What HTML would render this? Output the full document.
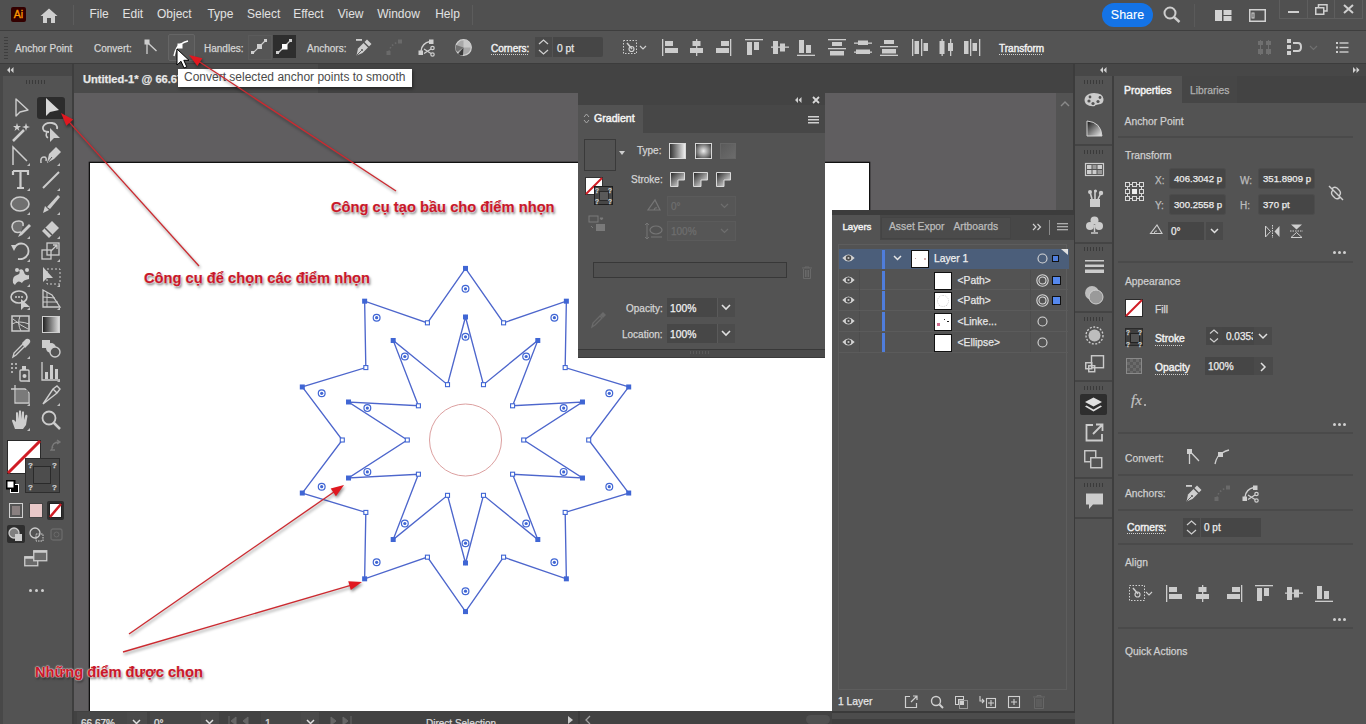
<!DOCTYPE html>
<html><head><meta charset="utf-8"><style>
html,body{margin:0;padding:0;}
body{width:1366px;height:724px;overflow:hidden;position:relative;background:#535353;font-family:"Liberation Sans", sans-serif;}
.a{position:absolute;}
.t{position:absolute;white-space:nowrap;-webkit-text-stroke:0.25px currentColor;}
svg{overflow:visible}
</style></head><body>
<div class="a" style="left:0px;top:0px;width:1366px;height:30px;background:#505050;"></div>
<div class="a" style="left:0px;top:30px;width:1366px;height:1px;background:#3e3e3e;"></div>
<div class="a" style="left:0px;top:31px;width:1366px;height:33px;background:#545454;"></div>
<div class="a" style="left:0px;top:63px;width:1366px;height:1px;background:#3c3c3c;"></div>
<div class="a" style="left:0px;top:64px;width:72px;height:660px;background:#535353;"></div>
<div class="a" style="left:0px;top:64px;width:72px;height:12px;background:#474747;"></div>
<div class="a" style="left:72px;top:64px;width:2px;height:660px;background:#3e3e3e;"></div>
<div class="a" style="left:74px;top:64px;width:999px;height:29px;background:#434343;"></div>
<div class="a" style="left:74px;top:64px;width:244px;height:29px;background:#4a4a4a;"></div>
<div class="a" style="left:74px;top:93px;width:982px;height:618px;background:#605e60;"></div>
<div class="a" style="left:90px;top:163px;width:779px;height:548px;background:#ffffff;box-shadow:0 0 0 1.3px #111;"></div>
<div class="a" style="left:1056px;top:93px;width:17px;height:618px;background:#535353;"></div>
<div class="a" style="left:74px;top:711px;width:999px;height:13px;background:#424242;"></div>
<div class="a" style="left:1073px;top:64px;width:2px;height:660px;background:#3c3c3c;"></div>
<div class="a" style="left:1075px;top:64px;width:38px;height:660px;background:#535353;"></div>
<div class="a" style="left:1075px;top:64px;width:291px;height:12px;background:#474747;"></div>
<div class="a" style="left:1112px;top:76px;width:2px;height:648px;background:#3e3e3e;"></div>
<div class="a" style="left:1114px;top:76px;width:252px;height:648px;background:#535353;"></div>
<div class="a" style="left:1114px;top:76px;width:252px;height:27px;background:#434343;"></div>
<div class="a" style="left:1114px;top:76px;width:68px;height:27px;background:#535353;"></div>
<div class="a" style="left:1182px;top:76px;width:55px;height:27px;background:#464646;"></div>
<div class="t" style="left:83px;top:72.95px;font-size:11.1px;line-height:12.40px;color:#e8e8e8;font-weight:bold;">Untitled-1* @ 66.67% (RGB/Preview)</div>
<svg class="a" style="left:1060px;top:100px;" width="10" height="7" viewBox="0 0 10 7"><path d="M1,6 L5,2 L9,6" fill="none" stroke="#8a8a8a" stroke-width="1.4"/></svg>
<div class="a" style="left:77px;top:712px;width:50px;height:12px;background:#474747;"></div>
<div class="t" style="left:81px;top:717.95px;font-size:10px;line-height:11.17px;color:#e0e0e0;font-weight:normal;">66.67%</div>
<div class="a" style="left:127px;top:712px;width:20px;height:12px;background:#4a4a4a;"></div>
<svg class="a" style="left:132px;top:719px;" width="9" height="6" viewBox="0 0 9 6"><path d="M1,1 L4.5,4.5 L8,1" fill="none" stroke="#e0e0e0" stroke-width="1.5"/></svg>
<div class="a" style="left:150px;top:712px;width:51px;height:12px;background:#474747;"></div>
<div class="t" style="left:154px;top:717.95px;font-size:10px;line-height:11.17px;color:#e0e0e0;font-weight:normal;">0°</div>
<div class="a" style="left:201px;top:712px;width:18px;height:12px;background:#4a4a4a;"></div>
<svg class="a" style="left:205px;top:719px;" width="9" height="6" viewBox="0 0 9 6"><path d="M1,1 L4.5,4.5 L8,1" fill="none" stroke="#e0e0e0" stroke-width="1.5"/></svg>
<svg class="a" style="left:228px;top:716px;" width="30" height="8" viewBox="0 0 30 8"><path d="M1,0 V8 M8,1 L3,5 L8,9 Z M20,1 L15,5 L20,9 Z" fill="#666" stroke="#666"/></svg>
<div class="a" style="left:261px;top:712px;width:40px;height:12px;background:#474747;"></div>
<div class="t" style="left:265px;top:717.50px;font-size:10.5px;line-height:11.73px;color:#e0e0e0;font-weight:normal;">1</div>
<div class="a" style="left:301px;top:712px;width:18px;height:12px;background:#4a4a4a;"></div>
<svg class="a" style="left:306px;top:719px;" width="9" height="6" viewBox="0 0 9 6"><path d="M1,1 L4.5,4.5 L8,1" fill="none" stroke="#e0e0e0" stroke-width="1.5"/></svg>
<svg class="a" style="left:326px;top:716px;" width="30" height="8" viewBox="0 0 30 8"><path d="M5,1 L10,5 L5,9 Z M17,1 L22,5 L17,9 Z M25,0 V8" fill="#666" stroke="#666"/></svg>
<div class="t" style="left:426px;top:717.95px;font-size:10px;line-height:11.17px;color:#d8d8d8;font-weight:normal;">Direct Selection</div>
<svg class="a" style="left:567px;top:715px;" width="7" height="9" viewBox="0 0 7 9"><path d="M1,1 L6,5 L1,9 Z" fill="#c8c8c8"/></svg>
<div class="a" style="left:578px;top:711px;width:2px;height:13px;background:#3a3a3a;"></div>
<svg class="a" style="left:584px;top:715px;" width="7" height="9" viewBox="0 0 7 9"><path d="M6,1 L2,5 L6,9" fill="none" stroke="#a0a0a0" stroke-width="1.3"/></svg>
<div class="a" style="left:806px;top:715px;width:24px;height:9px;background:#505050;border-radius:5px;"></div>
<svg class="a" style="left:0;top:0" width="1366" height="724" viewBox="0 0 1366 724"><path d="M465.50,268.40 L503.57,322.83 L566.36,301.17 L565.17,367.58 L628.70,386.97 L588.70,440.00 L628.70,493.03 L565.17,512.42 L566.36,578.83 L503.57,557.17 L465.50,611.60 L427.43,557.17 L364.64,578.83 L365.83,512.42 L302.30,493.03 L342.30,440.00 L302.30,386.97 L365.83,367.58 L364.64,301.17 L427.43,322.83 Z" fill="none" stroke="#4d66cc" stroke-width="1.35"/><path d="M465.50,317.00 L483.48,384.65 L537.80,340.49 L512.58,405.79 L582.48,401.99 L523.70,440.00 L582.48,478.01 L512.58,474.21 L537.80,539.51 L483.48,495.35 L465.50,563.00 L447.52,495.35 L393.20,539.51 L418.42,474.21 L348.52,478.01 L407.30,440.00 L348.52,401.99 L418.42,405.79 L393.20,340.49 L447.52,384.65 Z" fill="none" stroke="#4d66cc" stroke-width="1.35"/><circle cx="465.5" cy="440.0" r="36" fill="none" stroke="#dca0a0" stroke-width="1"/><rect x="463.00" y="265.90" width="5" height="5" fill="#4066d4"/><rect x="501.57" y="320.83" width="4" height="4" fill="#fff" stroke="#4066d4" stroke-width="1.1"/><rect x="563.86" y="298.67" width="5" height="5" fill="#4066d4"/><rect x="563.17" y="365.58" width="4" height="4" fill="#fff" stroke="#4066d4" stroke-width="1.1"/><rect x="626.20" y="384.47" width="5" height="5" fill="#4066d4"/><rect x="586.70" y="438.00" width="4" height="4" fill="#fff" stroke="#4066d4" stroke-width="1.1"/><rect x="626.20" y="490.53" width="5" height="5" fill="#4066d4"/><rect x="563.17" y="510.42" width="4" height="4" fill="#fff" stroke="#4066d4" stroke-width="1.1"/><rect x="563.86" y="576.33" width="5" height="5" fill="#4066d4"/><rect x="501.57" y="555.17" width="4" height="4" fill="#fff" stroke="#4066d4" stroke-width="1.1"/><rect x="463.00" y="609.10" width="5" height="5" fill="#4066d4"/><rect x="425.43" y="555.17" width="4" height="4" fill="#fff" stroke="#4066d4" stroke-width="1.1"/><rect x="362.14" y="576.33" width="5" height="5" fill="#4066d4"/><rect x="363.83" y="510.42" width="4" height="4" fill="#fff" stroke="#4066d4" stroke-width="1.1"/><rect x="299.80" y="490.53" width="5" height="5" fill="#4066d4"/><rect x="340.30" y="438.00" width="4" height="4" fill="#fff" stroke="#4066d4" stroke-width="1.1"/><rect x="299.80" y="384.47" width="5" height="5" fill="#4066d4"/><rect x="363.83" y="365.58" width="4" height="4" fill="#fff" stroke="#4066d4" stroke-width="1.1"/><rect x="362.14" y="298.67" width="5" height="5" fill="#4066d4"/><rect x="425.43" y="320.83" width="4" height="4" fill="#fff" stroke="#4066d4" stroke-width="1.1"/><circle cx="465.50" cy="288.80" r="3.4" fill="#fff" stroke="#4066d4" stroke-width="1.2"/><circle cx="465.50" cy="288.80" r="1.6" fill="#4066d4"/><circle cx="554.37" cy="317.68" r="3.4" fill="#fff" stroke="#4066d4" stroke-width="1.2"/><circle cx="554.37" cy="317.68" r="1.6" fill="#4066d4"/><circle cx="609.30" cy="393.28" r="3.4" fill="#fff" stroke="#4066d4" stroke-width="1.2"/><circle cx="609.30" cy="393.28" r="1.6" fill="#4066d4"/><circle cx="609.30" cy="486.72" r="3.4" fill="#fff" stroke="#4066d4" stroke-width="1.2"/><circle cx="609.30" cy="486.72" r="1.6" fill="#4066d4"/><circle cx="554.37" cy="562.32" r="3.4" fill="#fff" stroke="#4066d4" stroke-width="1.2"/><circle cx="554.37" cy="562.32" r="1.6" fill="#4066d4"/><circle cx="465.50" cy="591.20" r="3.4" fill="#fff" stroke="#4066d4" stroke-width="1.2"/><circle cx="465.50" cy="591.20" r="1.6" fill="#4066d4"/><circle cx="376.63" cy="562.32" r="3.4" fill="#fff" stroke="#4066d4" stroke-width="1.2"/><circle cx="376.63" cy="562.32" r="1.6" fill="#4066d4"/><circle cx="321.70" cy="486.72" r="3.4" fill="#fff" stroke="#4066d4" stroke-width="1.2"/><circle cx="321.70" cy="486.72" r="1.6" fill="#4066d4"/><circle cx="321.70" cy="393.28" r="3.4" fill="#fff" stroke="#4066d4" stroke-width="1.2"/><circle cx="321.70" cy="393.28" r="1.6" fill="#4066d4"/><circle cx="376.63" cy="317.68" r="3.4" fill="#fff" stroke="#4066d4" stroke-width="1.2"/><circle cx="376.63" cy="317.68" r="1.6" fill="#4066d4"/><rect x="463.00" y="314.50" width="5" height="5" fill="#4066d4"/><rect x="481.48" y="382.65" width="4" height="4" fill="#fff" stroke="#4066d4" stroke-width="1.1"/><rect x="535.30" y="337.99" width="5" height="5" fill="#4066d4"/><rect x="510.58" y="403.79" width="4" height="4" fill="#fff" stroke="#4066d4" stroke-width="1.1"/><rect x="579.98" y="399.49" width="5" height="5" fill="#4066d4"/><rect x="521.70" y="438.00" width="4" height="4" fill="#fff" stroke="#4066d4" stroke-width="1.1"/><rect x="579.98" y="475.51" width="5" height="5" fill="#4066d4"/><rect x="510.58" y="472.21" width="4" height="4" fill="#fff" stroke="#4066d4" stroke-width="1.1"/><rect x="535.30" y="537.01" width="5" height="5" fill="#4066d4"/><rect x="481.48" y="493.35" width="4" height="4" fill="#fff" stroke="#4066d4" stroke-width="1.1"/><rect x="463.00" y="560.50" width="5" height="5" fill="#4066d4"/><rect x="445.52" y="493.35" width="4" height="4" fill="#fff" stroke="#4066d4" stroke-width="1.1"/><rect x="390.70" y="537.01" width="5" height="5" fill="#4066d4"/><rect x="416.42" y="472.21" width="4" height="4" fill="#fff" stroke="#4066d4" stroke-width="1.1"/><rect x="346.02" y="475.51" width="5" height="5" fill="#4066d4"/><rect x="405.30" y="438.00" width="4" height="4" fill="#fff" stroke="#4066d4" stroke-width="1.1"/><rect x="346.02" y="399.49" width="5" height="5" fill="#4066d4"/><rect x="416.42" y="403.79" width="4" height="4" fill="#fff" stroke="#4066d4" stroke-width="1.1"/><rect x="390.70" y="337.99" width="5" height="5" fill="#4066d4"/><rect x="445.52" y="382.65" width="4" height="4" fill="#fff" stroke="#4066d4" stroke-width="1.1"/><circle cx="465.50" cy="336.80" r="3.4" fill="#fff" stroke="#4066d4" stroke-width="1.2"/><circle cx="465.50" cy="336.80" r="1.6" fill="#4066d4"/><circle cx="526.16" cy="356.51" r="3.4" fill="#fff" stroke="#4066d4" stroke-width="1.2"/><circle cx="526.16" cy="356.51" r="1.6" fill="#4066d4"/><circle cx="563.65" cy="408.11" r="3.4" fill="#fff" stroke="#4066d4" stroke-width="1.2"/><circle cx="563.65" cy="408.11" r="1.6" fill="#4066d4"/><circle cx="563.65" cy="471.89" r="3.4" fill="#fff" stroke="#4066d4" stroke-width="1.2"/><circle cx="563.65" cy="471.89" r="1.6" fill="#4066d4"/><circle cx="526.16" cy="523.49" r="3.4" fill="#fff" stroke="#4066d4" stroke-width="1.2"/><circle cx="526.16" cy="523.49" r="1.6" fill="#4066d4"/><circle cx="465.50" cy="543.20" r="3.4" fill="#fff" stroke="#4066d4" stroke-width="1.2"/><circle cx="465.50" cy="543.20" r="1.6" fill="#4066d4"/><circle cx="404.84" cy="523.49" r="3.4" fill="#fff" stroke="#4066d4" stroke-width="1.2"/><circle cx="404.84" cy="523.49" r="1.6" fill="#4066d4"/><circle cx="367.35" cy="471.89" r="3.4" fill="#fff" stroke="#4066d4" stroke-width="1.2"/><circle cx="367.35" cy="471.89" r="1.6" fill="#4066d4"/><circle cx="367.35" cy="408.11" r="3.4" fill="#fff" stroke="#4066d4" stroke-width="1.2"/><circle cx="367.35" cy="408.11" r="1.6" fill="#4066d4"/><circle cx="404.84" cy="356.51" r="3.4" fill="#fff" stroke="#4066d4" stroke-width="1.2"/><circle cx="404.84" cy="356.51" r="1.6" fill="#4066d4"/></svg>
<div class="a" style="left:578px;top:93px;width:247px;height:264px;background:#535353;"></div>
<div class="a" style="left:578px;top:93px;width:247px;height:12px;background:#434343;"></div>
<div class="a" style="left:578px;top:105px;width:247px;height:28px;background:#474747;"></div>
<div class="a" style="left:578px;top:105px;width:65px;height:28px;background:#535353;"></div>
<div class="a" style="left:578px;top:349px;width:247px;height:1px;background:#383838;"></div>
<div class="a" style="left:578px;top:350px;width:247px;height:7px;background:#4a4a4a;"></div>
<div class="a" style="left:578px;top:357px;width:247px;height:1px;background:#3a3a3a;"></div>
<div class="a" style="left:832px;top:210px;width:243px;height:514px;background:#535353;"></div>
<div class="a" style="left:832px;top:210px;width:243px;height:5px;background:#3c3c3c;"></div>
<div class="a" style="left:832px;top:215px;width:243px;height:25px;background:#474747;"></div>
<div class="a" style="left:832px;top:215px;width:48px;height:25px;background:#535353;"></div>
<div class="a" style="left:1074px;top:210px;width:1px;height:514px;background:#3a3a3a;"></div>
<div class="a" style="left:11px;top:7px;width:15px;height:15px;background:#330000;border-radius:2px;"></div>
<div class="t" style="left:11px;top:7px;width:15px;height:15px;line-height:15px;text-align:center;font-size:10.5px;font-weight:normal;color:#ff9a00;-webkit-text-stroke:0.3px #ff9a00;">Ai</div>
<svg class="a" style="left:40px;top:8px;" width="18" height="15" viewBox="0 0 18 15"><path d="M9,0.5 L17.5,8 L15,8 L15,15 L11,15 L11,10 L7,10 L7,15 L3,15 L3,8 L0.5,8 Z" fill="#cfcfcf"/></svg>
<div class="a" style="left:73px;top:5px;width:1px;height:20px;background:#5c5c5c;"></div>
<div class="t" style="left:89.4px;top:7.64px;font-size:12px;line-height:13.40px;color:#e2e2e2;font-weight:normal;-webkit-text-stroke:0;">File</div>
<div class="t" style="left:122.5px;top:7.64px;font-size:12px;line-height:13.40px;color:#e2e2e2;font-weight:normal;-webkit-text-stroke:0;">Edit</div>
<div class="t" style="left:157px;top:7.64px;font-size:12px;line-height:13.40px;color:#e2e2e2;font-weight:normal;-webkit-text-stroke:0;">Object</div>
<div class="t" style="left:207.4px;top:7.64px;font-size:12px;line-height:13.40px;color:#e2e2e2;font-weight:normal;-webkit-text-stroke:0;">Type</div>
<div class="t" style="left:247px;top:7.64px;font-size:12px;line-height:13.40px;color:#e2e2e2;font-weight:normal;-webkit-text-stroke:0;">Select</div>
<div class="t" style="left:293.2px;top:7.64px;font-size:12px;line-height:13.40px;color:#e2e2e2;font-weight:normal;-webkit-text-stroke:0;">Effect</div>
<div class="t" style="left:337.7px;top:7.64px;font-size:12px;line-height:13.40px;color:#e2e2e2;font-weight:normal;-webkit-text-stroke:0;">View</div>
<div class="t" style="left:377.2px;top:7.64px;font-size:12px;line-height:13.40px;color:#e2e2e2;font-weight:normal;-webkit-text-stroke:0;">Window</div>
<div class="t" style="left:435.2px;top:7.64px;font-size:12px;line-height:13.40px;color:#e2e2e2;font-weight:normal;-webkit-text-stroke:0;">Help</div>
<div class="a" style="left:472px;top:5px;width:1px;height:20px;background:#5c5c5c;"></div>
<div class="a" style="left:1102px;top:3px;width:51px;height:24px;background:#1473e6;border-radius:12px;"></div>
<div class="t" style="left:927.5px;width:400px;text-align:center;top:8.69px;font-size:12.5px;line-height:13.96px;color:#ffffff;font-weight:normal;-webkit-text-stroke:0.1px #fff;">Share</div>
<svg class="a" style="left:1163px;top:6px;" width="19" height="18" viewBox="0 0 19 18"><circle cx="7" cy="7" r="5.5" fill="none" stroke="#cdcdcd" stroke-width="2"/><line x1="11" y1="11" x2="16.5" y2="16" stroke="#cdcdcd" stroke-width="2.4"/></svg>
<div class="a" style="left:1194px;top:4px;width:1px;height:23px;background:#5a5a5a;"></div>
<svg class="a" style="left:1215px;top:10px;" width="17" height="12" viewBox="0 0 17 12"><rect x="0" y="0" width="7" height="11" fill="#d2d2d2"/><rect x="8.5" y="0" width="8" height="5" fill="#d2d2d2"/><rect x="8.5" y="6" width="8" height="5" fill="#d2d2d2"/></svg>
<svg class="a" style="left:1249px;top:9px;" width="17" height="13" viewBox="0 0 17 13"><rect x="0.75" y="0.75" width="15.5" height="11.5" fill="none" stroke="#d2d2d2" stroke-width="1.5"/><rect x="3" y="4" width="2" height="5" fill="none" stroke="#d2d2d2" stroke-width="1"/></svg>
<div class="a" style="left:1279px;top:-1px;width:82px;height:19px;border:1px solid #5e5e5e;border-top:none;"></div>
<div class="a" style="left:1307px;top:0px;width:1px;height:18px;background:#5e5e5e;"></div>
<div class="a" style="left:1334px;top:0px;width:1px;height:18px;background:#5e5e5e;"></div>
<div class="a" style="left:1288px;top:11px;width:11px;height:2px;background:#cfcfcf;"></div>
<svg class="a" style="left:1315px;top:4px;" width="13" height="11" viewBox="0 0 13 11"><rect x="0.75" y="3.75" width="8" height="6.5" fill="none" stroke="#cfcfcf" stroke-width="1.5"/><path d="M3.5,3.5 L3.5,0.75 L12,0.75 L12,7 L9,7" fill="none" stroke="#cfcfcf" stroke-width="1.5"/></svg>
<svg class="a" style="left:1343px;top:4px;" width="11" height="10" viewBox="0 0 11 10"><path d="M1,1 L10,9 M10,1 L1,9" stroke="#cfcfcf" stroke-width="2"/></svg>
<div class="a" style="left:4px;top:37px;width:4px;height:23px;background:repeating-linear-gradient(#3e3e3e 0 1px,transparent 1px 3px);"></div>
<div class="t" style="left:15px;top:43.25px;font-size:10px;line-height:11.17px;color:#d4d4d4;font-weight:normal;">Anchor Point</div>
<div class="t" style="left:94px;top:43.25px;font-size:10px;line-height:11.17px;color:#d4d4d4;font-weight:normal;">Convert:</div>
<svg class="a" style="left:144px;top:39px;" width="14" height="16" viewBox="0 0 14 16"><rect x="0.5" y="0.5" width="5" height="5" fill="#cfcfcf"/><line x1="3" y1="5" x2="3" y2="15" stroke="#cfcfcf" stroke-width="1.3"/><line x1="4" y1="4" x2="12.5" y2="12" stroke="#cfcfcf" stroke-width="1.3"/></svg>
<div class="a" style="left:168px;top:34px;width:25px;height:25px;border:1px solid #656565;background:#585858;border-radius:2px;"></div>
<svg class="a" style="left:173px;top:39px;" width="16" height="18" viewBox="0 0 16 18"><path d="M1,17 Q3,7 8,5 Q11,3 15,2" fill="none" stroke="#ffffff" stroke-width="1.4"/><rect x="4.5" y="4.5" width="5" height="5" fill="#ffffff"/></svg>
<div class="t" style="left:204px;top:43.25px;font-size:10px;line-height:11.17px;color:#d4d4d4;font-weight:normal;">Handles:</div>
<div class="a" style="left:248px;top:35px;width:22px;height:23px;background:#555;border:1px solid #5b5b5b;"></div>
<svg class="a" style="left:251px;top:38px;" width="17" height="17" viewBox="0 0 17 17"><line x1="2" y1="15" x2="15" y2="2" stroke="#cfcfcf" stroke-width="1.2"/><rect x="6" y="6" width="5" height="5" fill="#cfcfcf"/><rect x="0" y="13" width="3" height="3" fill="#cfcfcf"/><rect x="13" y="1" width="3" height="3" fill="#cfcfcf"/></svg>
<div class="a" style="left:273px;top:35px;width:23px;height:23px;background:#2e2e2e;"></div>
<svg class="a" style="left:276px;top:38px;" width="17" height="17" viewBox="0 0 17 17"><line x1="2" y1="15" x2="15" y2="2" stroke="#cfcfcf" stroke-width="1.2"/><rect x="6" y="6" width="5.5" height="5.5" fill="#fff"/><rect x="0" y="13" width="3" height="3" fill="#cfcfcf"/><rect x="13" y="1" width="3" height="3" fill="#cfcfcf"/></svg>
<div class="t" style="left:307px;top:43.25px;font-size:10px;line-height:11.17px;color:#d4d4d4;font-weight:normal;">Anchors:</div>
<svg class="a" style="left:355px;top:38px;" width="18" height="19" viewBox="0 0 18 19"><rect x="1" y="1" width="6" height="1.8" fill="#cfcfcf"/><path d="M1.5,17.5 L3,10.5 L8.5,5 L13,9.5 L7.5,15 Z" fill="#cfcfcf"/><path d="M9.5,4 L12,1.5 L16.5,6 L14,8.5 Z" fill="#cfcfcf"/><path d="M1.8,17.2 L6.5,12.5" stroke="#545454" stroke-width="0.9"/><circle cx="7" cy="12" r="1" fill="#545454"/></svg>
<svg class="a" style="left:386px;top:39px;" width="17" height="17" viewBox="0 0 17 17"><path d="M3,13 Q4,6 12,3" fill="none" stroke="#6a6a6a" stroke-width="1.6" stroke-dasharray="1.6 2"/><rect x="0.5" y="12" width="4" height="4" fill="#6a6a6a"/><rect x="12" y="0.5" width="4" height="4" fill="#6a6a6a"/></svg>
<svg class="a" style="left:418px;top:39px;" width="18" height="18" viewBox="0 0 18 18"><path d="M3,12 Q4,4 12,2.5" fill="none" stroke="#cfcfcf" stroke-width="1.3"/><rect x="0.5" y="11.5" width="4.5" height="4.5" fill="#cfcfcf"/><rect x="11" y="0.5" width="4.5" height="4.5" fill="#cfcfcf"/><circle cx="14.5" cy="9" r="1.7" fill="none" stroke="#cfcfcf" stroke-width="1.2"/><circle cx="14.5" cy="15.5" r="1.7" fill="none" stroke="#cfcfcf" stroke-width="1.2"/><path d="M6,10 L13,14.5 M6,14.5 L13,10" stroke="#cfcfcf" stroke-width="1.3"/></svg>
<svg class="a" style="left:455px;top:39px;" width="17" height="17" viewBox="0 0 17 17"><circle cx="8.5" cy="8.5" r="7.8" fill="#a8a8a8" stroke="#d0d0d0" stroke-width="1.2"/><path d="M8.5,8.5 L8.5,0.7 A7.8,7.8 0 0 1 16.3,8.5 Z" fill="#c8c8c8"/><path d="M8.5,8.5 L2,13 A7.8,7.8 0 0 1 1,6 Z" fill="#707070"/><path d="M8.5,8.5 L3,15 A7.8,7.8 0 0 0 8,16.3 Z" fill="#3a3a3a"/></svg>
<div class="t" style="left:491px;top:43.25px;font-size:10px;line-height:11.17px;color:#f2f2f2;font-weight:normal;-webkit-text-stroke:0.4px #f2f2f2;">Corners:</div>
<div class="a" style="left:491px;top:54px;width:37px;height:1px;background:repeating-linear-gradient(90deg,#cfcfcf 0 1px,transparent 1px 2px);"></div>
<div class="a" style="left:535px;top:37px;width:17px;height:20px;background:#494949;"></div>
<svg class="a" style="left:538px;top:39px;" width="11" height="16" viewBox="0 0 11 16"><path d="M1,5 L5.5,1 L10,5 M1,11 L5.5,15 L10,11" fill="none" stroke="#cfcfcf" stroke-width="1.3"/></svg>
<div class="a" style="left:553px;top:37px;width:50px;height:20px;background:#464646;border-radius:0 2px 2px 0;"></div>
<div class="t" style="left:557px;top:42.68px;font-size:10.3px;line-height:11.51px;color:#e6e6e6;font-weight:normal;">0 pt</div>
<svg class="a" style="left:623px;top:40px;" width="25" height="16" viewBox="0 0 25 16"><rect x="0.5" y="0.5" width="13" height="13" fill="none" stroke="#cfcfcf" stroke-width="1" stroke-dasharray="1.5 1.5"/><path d="M4,3 L9,9" stroke="#cfcfcf" stroke-width="1.5"/><circle cx="8.5" cy="9" r="2.5" fill="none" stroke="#cfcfcf" stroke-width="1.2"/><path d="M17,6 L20,9 L23,6" fill="none" stroke="#cfcfcf" stroke-width="1.2"/></svg>
<svg class="a" style="left:662px;top:39px;" width="18" height="17" viewBox="0 0 18 17"><rect x="0" y="0" width="1.3" height="17" fill="#cccccc"/><rect x="3" y="2" width="8" height="5" fill="#cccccc"/><rect x="3" y="9" width="13" height="5" fill="#cccccc"/></svg>
<svg class="a" style="left:689px;top:39px;" width="18" height="17" viewBox="0 0 18 17"><rect x="7" y="0" width="1.3" height="17" fill="#cccccc"/><rect x="3.5" y="2" width="8" height="5" fill="#cccccc"/><rect x="1" y="9" width="13" height="5" fill="#cccccc"/></svg>
<svg class="a" style="left:715px;top:39px;" width="18" height="17" viewBox="0 0 18 17"><rect x="15" y="0" width="1.3" height="17" fill="#cccccc"/><rect x="6" y="2" width="8" height="5" fill="#cccccc"/><rect x="1" y="9" width="13" height="5" fill="#cccccc"/></svg>
<svg class="a" style="left:745px;top:39px;" width="18" height="17" viewBox="0 0 18 17"><rect x="0" y="0" width="18" height="1.3" fill="#cccccc"/><rect x="2" y="3" width="5" height="13" fill="#cccccc"/><rect x="9" y="3" width="5" height="8" fill="#cccccc"/></svg>
<svg class="a" style="left:771px;top:39px;" width="18" height="17" viewBox="0 0 18 17"><rect x="0" y="7.5" width="18" height="1.3" fill="#cccccc"/><rect x="2" y="2" width="5" height="13" fill="#cccccc"/><rect x="9" y="4.5" width="5" height="8" fill="#cccccc"/></svg>
<svg class="a" style="left:797px;top:39px;" width="18" height="17" viewBox="0 0 18 17"><rect x="0" y="15.7" width="18" height="1.3" fill="#cccccc"/><rect x="2" y="1" width="5" height="13" fill="#cccccc"/><rect x="9" y="6" width="5" height="8" fill="#cccccc"/></svg>
<svg class="a" style="left:828px;top:39px;" width="18" height="17" viewBox="0 0 18 17"><rect x="0" y="0" width="18" height="1.3" fill="#cccccc"/><rect x="4" y="3" width="10" height="4" fill="#cccccc"/><rect x="0" y="9" width="18" height="1.3" fill="#cccccc"/><rect x="2" y="12" width="14" height="4.5" fill="#cccccc"/></svg>
<svg class="a" style="left:854px;top:39px;" width="18" height="17" viewBox="0 0 18 17"><rect x="0" y="3.5" width="18" height="1.3" fill="#cccccc"/><rect x="4" y="1.5" width="10" height="4.5" fill="#cccccc"/><rect x="0" y="12.5" width="18" height="1.3" fill="#cccccc"/><rect x="2" y="10.5" width="14" height="4.5" fill="#cccccc"/></svg>
<svg class="a" style="left:880px;top:39px;" width="18" height="17" viewBox="0 0 18 17"><rect x="4" y="1" width="10" height="4" fill="#cccccc"/><rect x="0" y="7" width="18" height="1.3" fill="#cccccc"/><rect x="2" y="10" width="14" height="4.5" fill="#cccccc"/><rect x="0" y="15.7" width="18" height="1.3" fill="#cccccc"/></svg>
<svg class="a" style="left:912px;top:39px;" width="18" height="17" viewBox="0 0 18 17"><rect x="0" y="0" width="1.3" height="17" fill="#cccccc"/><rect x="2.5" y="2" width="4.5" height="13" fill="#cccccc"/><rect x="9" y="0" width="1.3" height="17" fill="#cccccc"/><rect x="11.5" y="4" width="4.5" height="8" fill="#cccccc"/></svg>
<svg class="a" style="left:938px;top:39px;" width="18" height="17" viewBox="0 0 18 17"><rect x="3.5" y="0" width="1.3" height="17" fill="#cccccc"/><rect x="1.5" y="2" width="5" height="13" fill="#cccccc"/><rect x="12" y="0" width="1.3" height="17" fill="#cccccc"/><rect x="10" y="4" width="5" height="8" fill="#cccccc"/></svg>
<svg class="a" style="left:963px;top:39px;" width="18" height="17" viewBox="0 0 18 17"><rect x="1" y="2" width="4.5" height="13" fill="#cccccc"/><rect x="7" y="0" width="1.3" height="17" fill="#cccccc"/><rect x="9.5" y="4" width="4.5" height="8" fill="#cccccc"/><rect x="16" y="0" width="1.3" height="17" fill="#cccccc"/></svg>
<div class="t" style="left:999px;top:43.25px;font-size:10px;line-height:11.17px;color:#f2f2f2;font-weight:normal;-webkit-text-stroke:0.4px #f2f2f2;">Transform</div>
<div class="a" style="left:999px;top:54px;width:44px;height:1px;background:repeating-linear-gradient(90deg,#cfcfcf 0 1px,transparent 1px 2px);"></div>
<svg class="a" style="left:1258px;top:40px;" width="17" height="15" viewBox="0 0 17 15"><rect x="0" y="1" width="5" height="4" fill="#707070"/><rect x="8" y="1" width="5" height="4" fill="#707070"/><rect x="0" y="9" width="5" height="5" fill="#707070"/><rect x="8" y="9" width="5" height="5" fill="#707070"/><rect x="2" y="0" width="1" height="15" fill="#707070"/><rect x="10" y="0" width="1" height="15" fill="#707070"/></svg>
<svg class="a" style="left:1287px;top:39px;" width="16" height="17" viewBox="0 0 16 17"><rect x="0" y="0" width="4" height="4" fill="#cfcfcf"/><rect x="0" y="6" width="4" height="4" fill="#cfcfcf"/><rect x="0" y="12" width="4" height="4" fill="#cfcfcf"/><path d="M6,4 L11,4 Q14,4 14,8 Q14,12 11,12 L6,12" fill="none" stroke="#cfcfcf" stroke-width="2"/></svg>
<svg class="a" style="left:1309px;top:45px;" width="9" height="6" viewBox="0 0 9 6"><path d="M1,1 L4.5,4.5 L8,1" fill="none" stroke="#707070" stroke-width="1.2"/></svg>
<svg class="a" style="left:1336px;top:42px;" width="13" height="11" viewBox="0 0 13 11"><rect x="0" y="0" width="2" height="2" fill="#cfcfcf"/><rect x="0" y="4.5" width="2" height="2" fill="#cfcfcf"/><rect x="0" y="9" width="2" height="2" fill="#cfcfcf"/><rect x="3.5" y="0.3" width="9" height="1.4" fill="#cfcfcf"/><rect x="3.5" y="4.8" width="9" height="1.4" fill="#cfcfcf"/><rect x="3.5" y="9.3" width="9" height="1.4" fill="#cfcfcf"/></svg>
<svg class="a" style="left:6px;top:66px;" width="8" height="8" viewBox="0 0 8 8"><path d="M4,1 L1,4 L4,7 Z M7.5,1 L4.5,4 L7.5,7 Z" fill="#d0d0d0"/></svg>
<div class="a" style="left:26px;top:80px;width:20px;height:4px;background:repeating-linear-gradient(90deg,#3a3a3a 0 1px,transparent 1px 3px);"></div>
<div class="a" style="left:37px;top:97px;width:28px;height:22px;background:#2c2c2c;border-radius:3px;"></div>
<div class="a" style="left:0px;top:76px;width:3px;height:648px;background:#484848;"></div>
<svg class="a" style="left:9px;top:96px;" width="24" height="24" viewBox="0 0 24 24"><path d="M7,3 L7,20 L11,16 L19,14 Z" fill="none" stroke="#cdcdcd" stroke-width="1.4" stroke-linejoin="round"/></svg>
<svg class="a" style="left:39px;top:96px;" width="24" height="24" viewBox="0 0 24 24"><path d="M7,2 L7,20 L11,16 L20,14 Z" fill="#d8d8d8"/></svg>
<svg class="a" style="left:9px;top:119.5px;" width="24" height="24" viewBox="0 0 24 24"><path d="M4,21 L15,10" stroke="#cdcdcd" stroke-width="2.5"/><path d="M8,3 L9,6 L12,6 L9.5,8 L10.5,11 L8,9 L5.5,11 L6.5,8 L4,6 L7,6 Z" fill="#cdcdcd"/><path d="M17,3 L18,6 L21,7 L18,8 L17,11 L16,8 L13,7 L16,6 Z" fill="#cdcdcd"/></svg>
<svg class="a" style="left:39px;top:119.5px;" width="24" height="24" viewBox="0 0 24 24"><path d="M10,12 Q3,12 4,7 Q6,2 13,3 Q19,4 18,9" fill="none" stroke="#cdcdcd" stroke-width="1.8"/><path d="M8,12 Q6,16 9,18" fill="none" stroke="#cdcdcd" stroke-width="1.5"/><path d="M11,8 L11,22 L15,18 L21,18 Z" fill="#cdcdcd"/></svg>
<svg class="a" style="left:9px;top:143px;" width="24" height="24" viewBox="0 0 24 24"><path d="M4,22 L4,4 L18,18" fill="none" stroke="#cdcdcd" stroke-width="1.5"/><path d="M21,20 L21,23 L18,23 Z" fill="#bdbdbd"/></svg>
<svg class="a" style="left:39px;top:143px;" width="24" height="24" viewBox="0 0 24 24"><path d="M2,20 Q1,14 5,14 Q8,14 7,18" fill="none" stroke="#cdcdcd" stroke-width="1.5"/><path d="M8,20 L10,11 L17,4 L22,9 L15,16 Z" fill="#cdcdcd"/><path d="M9,19 L13,14" stroke="#535353" stroke-width="1"/><path d="M21,20 L21,23 L18,23 Z" fill="#bdbdbd"/></svg>
<svg class="a" style="left:9px;top:167.5px;" width="24" height="24" viewBox="0 0 24 24"><path d="M4,3 L19,3 L19,7 M4,7 L4,3 M11.5,3 L11.5,20 M8,20 L15,20" fill="none" stroke="#cdcdcd" stroke-width="2.2"/><path d="M21,20 L21,23 L18,23 Z" fill="#bdbdbd"/></svg>
<svg class="a" style="left:39px;top:167.5px;" width="24" height="24" viewBox="0 0 24 24"><path d="M4,20 L20,4" stroke="#cdcdcd" stroke-width="2"/><path d="M21,20 L21,23 L18,23 Z" fill="#bdbdbd"/></svg>
<svg class="a" style="left:9px;top:192px;" width="24" height="24" viewBox="0 0 24 24"><ellipse cx="11" cy="12" rx="9" ry="7" fill="#707070" stroke="#cdcdcd" stroke-width="1.6"/><path d="M21,20 L21,23 L18,23 Z" fill="#bdbdbd"/></svg>
<svg class="a" style="left:39px;top:192px;" width="24" height="24" viewBox="0 0 24 24"><path d="M4,21 L6,14 L10,18 Z" fill="#cdcdcd"/><path d="M8,15 L19,3 L21,5 L11,17 Z" fill="#cdcdcd"/><path d="M21,20 L21,23 L18,23 Z" fill="#bdbdbd"/></svg>
<svg class="a" style="left:9px;top:215.5px;" width="24" height="24" viewBox="0 0 24 24"><path d="M12,16 Q4,18 3,11 Q3,5 10,5 Q15,5 14,10" fill="#707070" stroke="#cdcdcd" stroke-width="1.6"/><path d="M9,21 L11,17 L20,8 L22,10 L13,19 Z" fill="#cdcdcd"/><path d="M21,20 L21,23 L18,23 Z" fill="#bdbdbd"/></svg>
<svg class="a" style="left:39px;top:215.5px;" width="24" height="24" viewBox="0 0 24 24"><path d="M3,15 L13,5 L20,12 L10,22 Z" fill="#cdcdcd"/><path d="M6,12 L13,19" stroke="#535353" stroke-width="1.5"/><path d="M21,20 L21,23 L18,23 Z" fill="#bdbdbd"/></svg>
<svg class="a" style="left:9px;top:239px;" width="24" height="24" viewBox="0 0 24 24"><path d="M5,9 Q9,3 15,5 Q21,8 19,15 Q16,21 9,20" fill="none" stroke="#cdcdcd" stroke-width="1.8" stroke-dasharray="30 0"/><path d="M2,6 L8,6 L5,12 Z" fill="#cdcdcd"/><path d="M21,20 L21,23 L18,23 Z" fill="#bdbdbd"/></svg>
<svg class="a" style="left:39px;top:239px;" width="24" height="24" viewBox="0 0 24 24"><rect x="3" y="11" width="9" height="9" fill="none" stroke="#cdcdcd" stroke-width="1.3"/><rect x="8" y="4" width="12" height="12" fill="none" stroke="#cdcdcd" stroke-width="1.3"/><path d="M12,12 L18,6 M14,6 L18,6 L18,10" fill="none" stroke="#cdcdcd" stroke-width="1.3"/><path d="M21,20 L21,23 L18,23 Z" fill="#bdbdbd"/></svg>
<svg class="a" style="left:9px;top:263.7px;" width="24" height="24" viewBox="0 0 24 24"><path d="M4,19 Q3,12 8,11 Q12,10 10,6 Q14,4 15,8 Q16,12 20,11 L20,15 Q14,16 13,19 Q9,15 6,21 Z" fill="#cdcdcd"/><circle cx="8" cy="6" r="2" fill="#cdcdcd"/><circle cx="18" cy="6" r="2" fill="#cdcdcd"/><path d="M21,20 L21,23 L18,23 Z" fill="#bdbdbd"/></svg>
<svg class="a" style="left:39px;top:263.7px;" width="24" height="24" viewBox="0 0 24 24"><path d="M4,3 L4,18 L8,14 L14,14 Z" fill="#cdcdcd"/><rect x="8" y="5" width="13" height="15" fill="none" stroke="#cdcdcd" stroke-width="1" stroke-dasharray="2 2"/><path d="M21,20 L21,23 L18,23 Z" fill="#bdbdbd"/></svg>
<svg class="a" style="left:9px;top:286.7px;" width="24" height="24" viewBox="0 0 24 24"><ellipse cx="10" cy="10" rx="8" ry="6" fill="none" stroke="#cdcdcd" stroke-width="1.6"/><circle cx="7" cy="10" r="1" fill="#cdcdcd"/><circle cx="10" cy="10" r="1" fill="#cdcdcd"/><circle cx="13" cy="10" r="1" fill="#cdcdcd"/><path d="M12,12 L12,23 L15,20 L21,20 Z" fill="#cdcdcd"/><path d="M21,20 L21,23 L18,23 Z" fill="#bdbdbd"/></svg>
<svg class="a" style="left:39px;top:286.7px;" width="24" height="24" viewBox="0 0 24 24"><path d="M4,3 L4,20 L21,20 L13,8 Z" fill="none" stroke="#cdcdcd" stroke-width="1.3"/><path d="M8,5 L8,20 M4,10 L16,11 M4,15 L19,15" stroke="#cdcdcd" stroke-width="1"/><path d="M21,20 L21,23 L18,23 Z" fill="#bdbdbd"/></svg>
<svg class="a" style="left:9px;top:312px;" width="24" height="24" viewBox="0 0 24 24"><rect x="3" y="4" width="17" height="15" fill="none" stroke="#cdcdcd" stroke-width="1.5"/><path d="M3,12 Q10,8 20,12 M11,4 Q8,12 12,19 M4,7 Q12,14 19,17" fill="none" stroke="#cdcdcd" stroke-width="1"/></svg>
<div class="a" style="left:42px;top:316px;width:16px;height:15px;background:linear-gradient(90deg,#222,#ddd);border:1px solid #cfcfcf;"></div>
<svg class="a" style="left:9px;top:336px;" width="24" height="24" viewBox="0 0 24 24"><path d="M4,21 L5,17 L14,8 L16,10 L7,19 Z" fill="none" stroke="#cdcdcd" stroke-width="1.4"/><path d="M13,7 L17,3 Q19,2 21,4 Q22,6 20,8 L16,12 Z" fill="#cdcdcd"/><path d="M21,20 L21,23 L18,23 Z" fill="#bdbdbd"/></svg>
<svg class="a" style="left:39px;top:336px;" width="24" height="24" viewBox="0 0 24 24"><rect x="3" y="4" width="8" height="8" fill="#cdcdcd"/><circle cx="12" cy="12" r="5" fill="#cdcdcd"/><circle cx="16" cy="16" r="5" fill="#535353" stroke="#cdcdcd" stroke-width="1.4"/></svg>
<svg class="a" style="left:9px;top:359px;" width="24" height="24" viewBox="0 0 24 24"><rect x="11" y="11" width="9" height="11" rx="1" fill="none" stroke="#cdcdcd" stroke-width="1.4"/><circle cx="15.5" cy="17" r="2" fill="#cdcdcd"/><rect x="13" y="7" width="4" height="4" fill="#cdcdcd"/><circle cx="3" cy="5" r="1" fill="#cdcdcd"/><circle cx="7" cy="5" r="1" fill="#cdcdcd"/><circle cx="3" cy="9" r="1" fill="#cdcdcd"/><circle cx="7" cy="9" r="1" fill="#cdcdcd"/><circle cx="3" cy="13" r="1" fill="#cdcdcd"/><path d="M21,20 L21,23 L18,23 Z" fill="#bdbdbd"/></svg>
<svg class="a" style="left:39px;top:359px;" width="24" height="24" viewBox="0 0 24 24"><path d="M3,3 L3,21 L21,21" fill="none" stroke="#cdcdcd" stroke-width="1.3"/><rect x="6" y="13" width="3" height="7" fill="#cdcdcd"/><rect x="11" y="6" width="3" height="14" fill="#cdcdcd"/><rect x="16" y="10" width="3" height="10" fill="#cdcdcd"/><path d="M21,20 L21,23 L18,23 Z" fill="#bdbdbd"/></svg>
<svg class="a" style="left:9px;top:383.3px;" width="24" height="24" viewBox="0 0 24 24"><path d="M6,2 L6,20 L20,20 L20,10 L16,6 L6,6 M2,6 L6,6" fill="none" stroke="#cdcdcd" stroke-width="1.3"/><rect x="7" y="7" width="12" height="12" fill="#7a7a7a"/><path d="M21,20 L21,23 L18,23 Z" fill="#bdbdbd"/></svg>
<svg class="a" style="left:39px;top:383.3px;" width="24" height="24" viewBox="0 0 24 24"><path d="M4,21 L14,6 L18,3 L21,6 L18,10 Z" fill="none" stroke="#cdcdcd" stroke-width="1.4"/><path d="M14,6 L18,10" stroke="#cdcdcd" stroke-width="1.4"/><path d="M21,20 L21,23 L18,23 Z" fill="#bdbdbd"/></svg>
<svg class="a" style="left:9px;top:407.5px;" width="24" height="24" viewBox="0 0 24 24"><path d="M6,21 L3,13 Q3,11 5,12 L7,14 L7,5 Q8,3 9,5 L9.5,11 L10,3 Q11,1.5 12,3 L12.5,11 L13,4 Q14,2.5 15,4 L15,12 L16.5,7 Q18,6 18.5,8 L17,17 L14,21 Z" fill="#cdcdcd"/><path d="M21,20 L21,23 L18,23 Z" fill="#bdbdbd"/></svg>
<svg class="a" style="left:39px;top:407.5px;" width="24" height="24" viewBox="0 0 24 24"><circle cx="10" cy="10" r="6.5" fill="none" stroke="#cdcdcd" stroke-width="1.8"/><path d="M14.5,14.5 L21,21" stroke="#cdcdcd" stroke-width="2.5"/></svg>
<div class="a" style="left:7px;top:440px;width:34px;height:34px;background:#fff;border:1px solid #2a2a2a;box-sizing:border-box;overflow:hidden;"></div>
<svg class="a" style="left:7px;top:440px;" width="34" height="34" viewBox="0 0 34 34"><line x1="1" y1="33" x2="33" y2="1" stroke="#d01c24" stroke-width="3"/></svg>
<svg class="a" style="left:50px;top:439px;" width="13" height="13" viewBox="0 0 13 13"><path d="M2,10 Q2,3 9,3 M7,1 L10,3 L7,5 M3,8 L1,11 L5,11" fill="none" stroke="#7a7a7a" stroke-width="1.3"/></svg>
<div class="a" style="left:25px;top:458px;width:35px;height:35px;background:#474747;border:1px solid #2e2e2e;box-sizing:border-box;"></div>
<div class="a" style="left:33px;top:466px;width:18px;height:18px;border:1px solid #2a2a2a;box-sizing:border-box;background:#4d4d4d;"></div>
<div class="t" style="left:28px;top:461.76px;font-size:8px;line-height:8.94px;color:#d0d0d0;font-weight:bold;">?</div>
<div class="t" style="left:52px;top:461.76px;font-size:8px;line-height:8.94px;color:#d0d0d0;font-weight:bold;">?</div>
<div class="t" style="left:28px;top:483.76px;font-size:8px;line-height:8.94px;color:#d0d0d0;font-weight:bold;">?</div>
<div class="t" style="left:52px;top:483.76px;font-size:8px;line-height:8.94px;color:#d0d0d0;font-weight:bold;">?</div>
<svg class="a" style="left:6px;top:480px;" width="13" height="13" viewBox="0 0 13 13"><rect x="0.75" y="0.75" width="8" height="8" fill="#fff" stroke="#000" stroke-width="1.5"/><rect x="4.5" y="4.5" width="8" height="8" fill="#000" stroke="#fff" stroke-width="1"/><rect x="0.75" y="0.75" width="7.5" height="7.5" fill="#fff" stroke="#000" stroke-width="1.5"/></svg>
<div class="a" style="left:9px;top:503px;width:14px;height:15px;border:1.5px solid #d0d0d0;box-sizing:border-box;background:#555;"></div>
<div class="a" style="left:12px;top:506px;width:8px;height:9px;background:#8a8080;"></div>
<div class="a" style="left:29px;top:503px;width:14px;height:15px;background:#e8c8c8;border:1px solid #444;box-sizing:border-box;"></div>
<div class="a" style="left:47px;top:501px;width:17px;height:19px;background:#2e2e2e;border-radius:2px;"></div>
<div class="a" style="left:49px;top:503px;width:13px;height:15px;background:#fff;border:1px solid #222;box-sizing:border-box;"></div>
<svg class="a" style="left:49px;top:503px;" width="13" height="15" viewBox="0 0 13 15"><line x1="1" y1="14" x2="12" y2="1" stroke="#d01c24" stroke-width="2.5"/></svg>
<div class="a" style="left:7px;top:525px;width:18px;height:18px;background:#2e2e2e;border-radius:2px;"></div>
<svg class="a" style="left:8px;top:527px;" width="16" height="15" viewBox="0 0 16 15"><circle cx="6" cy="6" r="5" fill="#808080" stroke="#cdcdcd" stroke-width="1.3"/><rect x="7" y="7" width="7" height="7" fill="#cdcdcd"/></svg>
<svg class="a" style="left:29px;top:527px;" width="16" height="15" viewBox="0 0 16 15"><circle cx="6" cy="6" r="5" fill="none" stroke="#cdcdcd" stroke-width="1.3"/><rect x="7" y="7" width="7" height="7" fill="none" stroke="#cdcdcd" stroke-width="1" stroke-dasharray="1.5 1"/></svg>
<svg class="a" style="left:50px;top:528px;" width="14" height="13" viewBox="0 0 14 13"><rect x="1" y="1" width="11" height="11" rx="2" fill="none" stroke="#6a6a6a" stroke-width="1.3"/><circle cx="6.5" cy="6.5" r="2.5" fill="none" stroke="#6a6a6a" stroke-width="1"/></svg>
<svg class="a" style="left:24px;top:550px;" width="24" height="17" viewBox="0 0 24 17"><rect x="0.75" y="6.75" width="13" height="9" fill="#6a6a6a" stroke="#cdcdcd" stroke-width="1.3"/><rect x="0.75" y="6.75" width="13" height="2" fill="#cdcdcd"/><rect x="9.75" y="0.75" width="13" height="10" fill="#6a6a6a" stroke="#cdcdcd" stroke-width="1.3"/><rect x="9.75" y="0.75" width="13" height="2" fill="#cdcdcd"/></svg>
<div class="a" style="left:28.5px;top:589px;width:3px;height:3px;border-radius:50%;background:#cfcfcf;"></div>
<div class="a" style="left:34.5px;top:589px;width:3px;height:3px;border-radius:50%;background:#cfcfcf;"></div>
<div class="a" style="left:40.5px;top:589px;width:3px;height:3px;border-radius:50%;background:#cfcfcf;"></div>
<svg class="a" style="left:794px;top:96px;" width="8" height="8" viewBox="0 0 8 8"><path d="M4,1 L1,4 L4,7 Z M7.5,1 L4.5,4 L7.5,7 Z" fill="#d0d0d0"/></svg>
<svg class="a" style="left:812px;top:96px;" width="8" height="8" viewBox="0 0 8 8"><path d="M1,1 L7,7 M7,1 L1,7" stroke="#d8d8d8" stroke-width="1.8"/></svg>
<svg class="a" style="left:583px;top:113px;" width="7" height="11" viewBox="0 0 7 11"><path d="M1,4 L3.5,1 L6,4 M1,7 L3.5,10 L6,7" fill="none" stroke="#a8a8a8" stroke-width="1"/></svg>
<div class="t" style="left:594px;top:112.91px;font-size:10.6px;line-height:11.84px;color:#f4f4f4;font-weight:normal;-webkit-text-stroke:0.45px #f4f4f4;">Gradient</div>
<svg class="a" style="left:808px;top:116px;" width="11" height="8" viewBox="0 0 11 8"><path d="M0,0.75 H11 M0,3.75 H11 M0,6.75 H11" stroke="#d0d0d0" stroke-width="1.3"/></svg>
<div class="a" style="left:584px;top:139px;width:32px;height:32px;border:1px solid #3a3a3a;box-sizing:border-box;background:#535353;"></div>
<svg class="a" style="left:619px;top:151px;" width="7" height="5" viewBox="0 0 7 5"><path d="M0,0 L6,0 L3,4 Z" fill="#cfcfcf"/></svg>
<div class="a" style="left:585px;top:177px;width:18px;height:18px;background:#fff;border:1px solid #333;box-sizing:border-box;"></div>
<svg class="a" style="left:585px;top:177px;" width="18" height="18" viewBox="0 0 18 18"><line x1="1" y1="17" x2="17" y2="1" stroke="#d01c24" stroke-width="2"/></svg>
<div class="a" style="left:594px;top:186px;width:19px;height:19px;background:#474747;border:1px solid #1e1e1e;box-sizing:border-box;"></div>
<div class="a" style="left:599px;top:191px;width:8px;height:8px;background:#5a5a5a;border:1px solid #2a2a2a;"></div>
<div class="t" style="left:595px;top:187.12px;font-size:6.5px;line-height:7.26px;color:#cfcfcf;font-weight:bold;">?</div>
<div class="t" style="left:608px;top:187.12px;font-size:6.5px;line-height:7.26px;color:#cfcfcf;font-weight:bold;">?</div>
<div class="t" style="left:595px;top:198.12px;font-size:6.5px;line-height:7.26px;color:#cfcfcf;font-weight:bold;">?</div>
<div class="t" style="left:608px;top:198.12px;font-size:6.5px;line-height:7.26px;color:#cfcfcf;font-weight:bold;">?</div>
<svg class="a" style="left:588px;top:215px;" width="18" height="17" viewBox="0 0 18 17"><rect x="1" y="1" width="9" height="6" fill="none" stroke="#7a7a7a" stroke-width="1"/><rect x="8" y="9" width="9" height="7" fill="#7a7a7a"/><path d="M12,3 L15,3 L13.5,5 Z M3,11 L5,13" stroke="#7a7a7a" fill="#7a7a7a"/></svg>
<div class="t" style="left:637px;top:145.45px;font-size:10px;line-height:11.17px;color:#d4d4d4;font-weight:normal;">Type:</div>
<div class="a" style="left:669px;top:143px;width:17px;height:16px;background:linear-gradient(90deg,#333,#eee);border:1.5px solid #d8d8d8;box-sizing:border-box;"></div>
<div class="a" style="left:695px;top:143px;width:17px;height:16px;background:radial-gradient(circle,#eee,#333);border:1.5px solid #d8d8d8;box-sizing:border-box;"></div>
<div class="a" style="left:720px;top:143px;width:16px;height:16px;background:linear-gradient(135deg,#5a5a5a,#6c6c6c);border:1px solid #666;box-sizing:border-box;"></div>
<div class="t" style="left:631px;top:173.95px;font-size:10px;line-height:11.17px;color:#d4d4d4;font-weight:normal;">Stroke:</div>
<svg class="a" style="left:670px;top:172px;" width="15" height="15" viewBox="0 0 15 15"><defs><linearGradient id="g670" x1="0" y1="0" x2="1" y2="1"><stop offset="0" stop-color="#222"/><stop offset="1" stop-color="#fff"/></linearGradient></defs><path d="M0.5,0.5 L14.5,0.5 L14.5,8 L8,8 L8,14.5 L0.5,14.5 Z" fill="url(#g670)" stroke="#dadada" stroke-width="1"/></svg>
<svg class="a" style="left:693px;top:172px;" width="15" height="15" viewBox="0 0 15 15"><defs><linearGradient id="g693" x1="0" y1="0" x2="1" y2="1"><stop offset="0" stop-color="#222"/><stop offset="1" stop-color="#fff"/></linearGradient></defs><path d="M0.5,0.5 L14.5,0.5 L14.5,8 L8,8 L8,14.5 L0.5,14.5 Z" fill="url(#g693)" stroke="#dadada" stroke-width="1"/></svg>
<svg class="a" style="left:716px;top:172px;" width="15" height="15" viewBox="0 0 15 15"><defs><linearGradient id="g716" x1="0" y1="0" x2="1" y2="1"><stop offset="0" stop-color="#222"/><stop offset="1" stop-color="#fff"/></linearGradient></defs><path d="M0.5,0.5 L14.5,0.5 L14.5,8 L8,8 L8,14.5 L0.5,14.5 Z" fill="url(#g716)" stroke="#dadada" stroke-width="1"/></svg>
<svg class="a" style="left:647px;top:198px;" width="15" height="13" viewBox="0 0 15 13"><path d="M1,12 L13,12 L8,2 Z M7,12 Q8,9 10,10" fill="none" stroke="#767676" stroke-width="1.2"/></svg>
<div class="a" style="left:667px;top:196px;width:69px;height:20px;background:#565656;border:1px solid #5b5b5b;box-sizing:border-box;"></div>
<div class="t" style="left:671px;top:200.95px;font-size:10px;line-height:11.17px;color:#6e6e6e;font-weight:normal;">0°</div>
<svg class="a" style="left:720px;top:203px;" width="9" height="6" viewBox="0 0 9 6"><path d="M1,1 L4.5,4.5 L8,1" fill="none" stroke="#6e6e6e" stroke-width="1.2"/></svg>
<svg class="a" style="left:645px;top:222px;" width="19" height="18" viewBox="0 0 19 18"><path d="M2,1 V17 M0,3 L2,1 L4,3 M0,15 L2,17 L4,15" fill="none" stroke="#767676" stroke-width="1"/><ellipse cx="11" cy="8" rx="6" ry="4" fill="none" stroke="#767676" stroke-width="1.2"/><path d="M6,15 H17" stroke="#767676"/></svg>
<div class="a" style="left:667px;top:221px;width:69px;height:20px;background:#565656;border:1px solid #5b5b5b;box-sizing:border-box;"></div>
<div class="t" style="left:671px;top:225.95px;font-size:10px;line-height:11.17px;color:#6e6e6e;font-weight:normal;">100%</div>
<svg class="a" style="left:720px;top:228px;" width="9" height="6" viewBox="0 0 9 6"><path d="M1,1 L4.5,4.5 L8,1" fill="none" stroke="#6e6e6e" stroke-width="1.2"/></svg>
<div class="a" style="left:593px;top:262px;width:194px;height:16px;background:#505050;border:1px solid #383838;box-sizing:border-box;"></div>
<svg class="a" style="left:802px;top:266px;" width="10" height="13" viewBox="0 0 10 13"><path d="M0,2 H10 M3,2 V1 H7 V2 M1.5,3 V12.5 H8.5 V3 M3.5,4 V11 M5,4 V11 M6.5,4 V11" fill="none" stroke="#6c6c6c" stroke-width="0.9"/></svg>
<div class="t" style="left:626px;top:302.95px;font-size:10px;line-height:11.17px;color:#d4d4d4;font-weight:normal;">Opacity:</div>
<div class="a" style="left:667px;top:298px;width:50px;height:19px;background:#474747;"></div>
<div class="a" style="left:717px;top:298px;width:18px;height:19px;background:#4c4c4c;border-left:1px solid #5a5a5a;box-sizing:border-box;"></div>
<div class="t" style="left:670px;top:302.68px;font-size:10.3px;line-height:11.51px;color:#f0f0f0;font-weight:normal;">100%</div>
<svg class="a" style="left:721px;top:304px;" width="10" height="7" viewBox="0 0 10 7"><path d="M1,1 L5,5 L9,1" fill="none" stroke="#e0e0e0" stroke-width="1.6"/></svg>
<div class="t" style="left:622px;top:328.95px;font-size:10px;line-height:11.17px;color:#d4d4d4;font-weight:normal;">Location:</div>
<div class="a" style="left:667px;top:324px;width:50px;height:19px;background:#474747;"></div>
<div class="a" style="left:717px;top:324px;width:18px;height:19px;background:#4c4c4c;border-left:1px solid #5a5a5a;box-sizing:border-box;"></div>
<div class="t" style="left:670px;top:328.68px;font-size:10.3px;line-height:11.51px;color:#f0f0f0;font-weight:normal;">100%</div>
<svg class="a" style="left:721px;top:330px;" width="10" height="7" viewBox="0 0 10 7"><path d="M1,1 L5,5 L9,1" fill="none" stroke="#e0e0e0" stroke-width="1.6"/></svg>
<svg class="a" style="left:590px;top:311px;" width="17" height="18" viewBox="0 0 17 18"><path d="M2,16 L3,12 L10,5 L12,7 L5,14 Z" fill="none" stroke="#6a6a6a" stroke-width="1.3"/><path d="M10,4 L13,1 L16,4 L13,7 Z" fill="#6a6a6a"/></svg>
<div class="a" style="left:690px;top:351px;width:20px;height:3px;background:repeating-linear-gradient(90deg,#5a5a5a 0 1px,transparent 1px 3px);"></div>
<div class="t" style="left:842.4px;top:222.22px;font-size:9.7px;line-height:10.83px;color:#f4f4f4;font-weight:normal;-webkit-text-stroke:0.4px #f4f4f4;">Layers</div>
<div class="a" style="left:881px;top:217px;width:130px;height:22px;background:#4b4b4b;box-shadow:inset 0 0 0 1px #444;"></div>
<div class="t" style="left:889px;top:221.18px;font-size:10.3px;line-height:11.51px;color:#bcbcbc;font-weight:normal;">Asset Expor</div>
<div class="t" style="left:953.4px;top:221.18px;font-size:10.3px;line-height:11.51px;color:#bcbcbc;font-weight:normal;">Artboards</div>
<svg class="a" style="left:1032px;top:223px;" width="10" height="8" viewBox="0 0 10 8"><path d="M1,1 L4,4 L1,7 M5.5,1 L8.5,4 L5.5,7" fill="none" stroke="#d0d0d0" stroke-width="1.2"/></svg>
<div class="a" style="left:1049px;top:220px;width:1px;height:15px;background:#8a8a8a;"></div>
<svg class="a" style="left:1057px;top:223px;" width="11" height="8" viewBox="0 0 11 8"><path d="M0,0.75 H11 M0,3.75 H11 M0,6.75 H11" stroke="#d0d0d0" stroke-width="1.2"/></svg>
<div class="a" style="left:838px;top:244px;width:229px;height:446px;border:1px solid #5d5d5d;box-sizing:border-box;"></div>
<div class="a" style="left:839px;top:249px;width:230px;height:20px;background:#4b5e7a;"></div>
<svg class="a" style="left:842px;top:253px;" width="13" height="10" viewBox="0 0 13 10"><path d="M0.3,5 Q6.5,-2 12.7,5 Q6.5,12 0.3,5 Z" fill="#d4d4d4"/><circle cx="6.5" cy="5" r="2.7" fill="#4a4a4a"/><circle cx="6.5" cy="5" r="1.1" fill="#c8c8c8"/></svg>
<div class="a" style="left:882px;top:250px;width:3px;height:19px;background:#4f7ddb;"></div>
<svg class="a" style="left:893px;top:255px;" width="9" height="6" viewBox="0 0 9 6"><path d="M1,1 L4.5,4.5 L8,1" fill="none" stroke="#e6e6e6" stroke-width="1.5"/></svg>
<div class="a" style="left:911px;top:250px;width:18px;height:18px;background:#fff;border:1px solid #111;box-sizing:border-box;"></div>
<div class="a" style="left:915px;top:258px;width:1px;height:1px;background:#c8a0a0;"></div>
<div class="a" style="left:924px;top:258px;width:2px;height:2px;background:#d8b0b0;"></div>
<div class="t" style="left:934px;top:253.18px;font-size:10.3px;line-height:11.51px;color:#f0f0f0;font-weight:normal;">Layer 1</div>
<svg class="a" style="left:1037px;top:253px;" width="11" height="11" viewBox="0 0 11 11"><circle cx="5.5" cy="5.5" r="4.5" fill="none" stroke="#d8d8d8" stroke-width="1.1"/></svg>
<div class="a" style="left:1052px;top:255px;width:7px;height:7px;background:#4f7ddb;border:1px solid #111;box-sizing:border-box;"></div>
<svg class="a" style="left:1061px;top:249px;" width="7" height="6" viewBox="0 0 7 6"><path d="M0,0 L7,0 L7,6 Z" fill="#e0e0e0"/></svg>
<div class="a" style="left:839px;top:289px;width:229px;height:1px;background:#5b5b5b;"></div>
<div class="a" style="left:859px;top:270px;width:1px;height:20px;background:#4d4d4d;"></div>
<div class="a" style="left:1030px;top:270px;width:1px;height:20px;background:#4d4d4d;"></div>
<svg class="a" style="left:842px;top:275px;" width="13" height="10" viewBox="0 0 13 10"><path d="M0.3,5 Q6.5,-2 12.7,5 Q6.5,12 0.3,5 Z" fill="#d4d4d4"/><circle cx="6.5" cy="5" r="2.7" fill="#4a4a4a"/><circle cx="6.5" cy="5" r="1.1" fill="#c8c8c8"/></svg>
<div class="a" style="left:882px;top:271px;width:3px;height:19px;background:#4f7ddb;"></div>
<div class="a" style="left:934px;top:272px;width:18px;height:18px;background:#fff;border:1px solid #111;box-sizing:border-box;"></div>
<div class="t" style="left:957.6px;top:274.68px;font-size:10.3px;line-height:11.51px;color:#e6e6e6;font-weight:normal;">&lt;Path&gt;</div>
<svg class="a" style="left:1036px;top:274px;" width="13" height="13" viewBox="0 0 13 13"><circle cx="6.5" cy="6.5" r="5.7" fill="none" stroke="#d8d8d8" stroke-width="1.1"/><circle cx="6.5" cy="6.5" r="3.5" fill="none" stroke="#d8d8d8" stroke-width="1.1"/></svg>
<div class="a" style="left:1052px;top:276px;width:9px;height:9px;background:#5588ee;border:1px solid #111;box-sizing:border-box;"></div>
<div class="a" style="left:839px;top:310px;width:229px;height:1px;background:#5b5b5b;"></div>
<div class="a" style="left:859px;top:290px;width:1px;height:20px;background:#4d4d4d;"></div>
<div class="a" style="left:1030px;top:290px;width:1px;height:20px;background:#4d4d4d;"></div>
<svg class="a" style="left:842px;top:295px;" width="13" height="10" viewBox="0 0 13 10"><path d="M0.3,5 Q6.5,-2 12.7,5 Q6.5,12 0.3,5 Z" fill="#d4d4d4"/><circle cx="6.5" cy="5" r="2.7" fill="#4a4a4a"/><circle cx="6.5" cy="5" r="1.1" fill="#c8c8c8"/></svg>
<div class="a" style="left:882px;top:291px;width:3px;height:19px;background:#4f7ddb;"></div>
<div class="a" style="left:934px;top:292px;width:18px;height:18px;background:#fff;border:1px solid #111;box-sizing:border-box;"></div>
<div class="a" style="left:937px;top:295px;width:12px;height:12px;border-radius:50%;border:1px dotted #ccc;box-sizing:border-box;"></div>
<div class="t" style="left:957.6px;top:294.68px;font-size:10.3px;line-height:11.51px;color:#e6e6e6;font-weight:normal;">&lt;Path&gt;</div>
<svg class="a" style="left:1036px;top:294px;" width="13" height="13" viewBox="0 0 13 13"><circle cx="6.5" cy="6.5" r="5.7" fill="none" stroke="#d8d8d8" stroke-width="1.1"/><circle cx="6.5" cy="6.5" r="3.5" fill="none" stroke="#d8d8d8" stroke-width="1.1"/></svg>
<div class="a" style="left:1052px;top:296px;width:9px;height:9px;background:#5588ee;border:1px solid #111;box-sizing:border-box;"></div>
<div class="a" style="left:839px;top:331px;width:229px;height:1px;background:#5b5b5b;"></div>
<div class="a" style="left:859px;top:311px;width:1px;height:20px;background:#4d4d4d;"></div>
<div class="a" style="left:1030px;top:311px;width:1px;height:20px;background:#4d4d4d;"></div>
<svg class="a" style="left:842px;top:316px;" width="13" height="10" viewBox="0 0 13 10"><path d="M0.3,5 Q6.5,-2 12.7,5 Q6.5,12 0.3,5 Z" fill="#d4d4d4"/><circle cx="6.5" cy="5" r="2.7" fill="#4a4a4a"/><circle cx="6.5" cy="5" r="1.1" fill="#c8c8c8"/></svg>
<div class="a" style="left:882px;top:312px;width:3px;height:19px;background:#4f7ddb;"></div>
<div class="a" style="left:934px;top:313px;width:18px;height:18px;background:#fff;border:1px solid #111;box-sizing:border-box;"></div>
<div class="a" style="left:937px;top:323px;width:3px;height:3px;background:#d07090;"></div>
<div class="a" style="left:944px;top:319px;width:1px;height:1px;background:#333;"></div>
<div class="a" style="left:947px;top:321px;width:2px;height:1px;background:#222;"></div>
<div class="t" style="left:957.6px;top:315.68px;font-size:10.3px;line-height:11.51px;color:#e6e6e6;font-weight:normal;">&lt;Linke...</div>
<svg class="a" style="left:1037px;top:316px;" width="11" height="11" viewBox="0 0 11 11"><circle cx="5.5" cy="5.5" r="4.5" fill="none" stroke="#d8d8d8" stroke-width="1.1"/></svg>
<div class="a" style="left:839px;top:352px;width:229px;height:1px;background:#5b5b5b;"></div>
<div class="a" style="left:859px;top:332px;width:1px;height:20px;background:#4d4d4d;"></div>
<div class="a" style="left:1030px;top:332px;width:1px;height:20px;background:#4d4d4d;"></div>
<svg class="a" style="left:842px;top:337px;" width="13" height="10" viewBox="0 0 13 10"><path d="M0.3,5 Q6.5,-2 12.7,5 Q6.5,12 0.3,5 Z" fill="#d4d4d4"/><circle cx="6.5" cy="5" r="2.7" fill="#4a4a4a"/><circle cx="6.5" cy="5" r="1.1" fill="#c8c8c8"/></svg>
<div class="a" style="left:882px;top:333px;width:3px;height:19px;background:#4f7ddb;"></div>
<div class="a" style="left:934px;top:334px;width:18px;height:18px;background:#fff;border:1px solid #111;box-sizing:border-box;"></div>
<div class="t" style="left:957.6px;top:336.68px;font-size:10.3px;line-height:11.51px;color:#e6e6e6;font-weight:normal;">&lt;Ellipse&gt;</div>
<svg class="a" style="left:1037px;top:337px;" width="11" height="11" viewBox="0 0 11 11"><circle cx="5.5" cy="5.5" r="4.5" fill="none" stroke="#d8d8d8" stroke-width="1.1"/></svg>
<div class="t" style="left:838px;top:695.68px;font-size:10.3px;line-height:11.51px;color:#e6e6e6;font-weight:normal;">1 Layer</div>
<svg class="a" style="left:904px;top:695px;" width="14" height="14" viewBox="0 0 14 14"><path d="M6,1.5 H1.5 V12.5 H12.5 V8" fill="none" stroke="#d0d0d0" stroke-width="1.2"/><path d="M7,7 L13,1 M9,1 H13 V5" fill="none" stroke="#d0d0d0" stroke-width="1.2"/></svg>
<svg class="a" style="left:930px;top:695px;" width="14" height="14" viewBox="0 0 14 14"><circle cx="6" cy="6" r="4.5" fill="none" stroke="#d0d0d0" stroke-width="1.4"/><path d="M9.5,9.5 L13,13" stroke="#d0d0d0" stroke-width="2"/></svg>
<svg class="a" style="left:955px;top:696px;" width="13" height="13" viewBox="0 0 13 13"><rect x="0.5" y="0.5" width="8" height="8" fill="none" stroke="#d0d0d0" stroke-width="1"/><rect x="3" y="3" width="6" height="6" fill="#d0d0d0"/><rect x="4.5" y="4.5" width="8" height="8" fill="none" stroke="#9a9a9a" stroke-width="1"/></svg>
<svg class="a" style="left:979px;top:695px;" width="18" height="14" viewBox="0 0 18 14"><path d="M1,1 V6 H5 M3,4 L5,6 L3,8" fill="none" stroke="#d0d0d0" stroke-width="1.1"/><rect x="7.5" y="3.5" width="9" height="9" fill="none" stroke="#d0d0d0" stroke-width="1.1"/><path d="M12,5 V11 M9,8 H15" stroke="#d0d0d0" stroke-width="1.1"/></svg>
<svg class="a" style="left:1008px;top:696px;" width="13" height="13" viewBox="0 0 13 13"><rect x="0.5" y="0.5" width="11" height="11" fill="none" stroke="#d0d0d0" stroke-width="1.1"/><path d="M6,3 V9 M3,6 H9" stroke="#d0d0d0" stroke-width="1.1"/></svg>
<svg class="a" style="left:1033px;top:695px;" width="12" height="14" viewBox="0 0 12 14"><path d="M0,2 H12 M4,2 V0.5 H8 V2 M1.5,3 V13.5 H10.5 V3 M4,4 V12 M6,4 V12 M8,4 V12" fill="none" stroke="#6a6a6a" stroke-width="0.9"/></svg>
<div class="a" style="left:832px;top:711px;width:243px;height:2px;background:#3a3a3a;"></div>
<div class="a" style="left:832px;top:713px;width:243px;height:6px;background:#4c4c4c;"></div>
<div class="a" style="left:832px;top:719px;width:243px;height:5px;background:#3e3e3e;"></div>
<svg class="a" style="left:1099px;top:66px;" width="8" height="8" viewBox="0 0 8 8"><path d="M4,1 L1,4 L4,7 Z M7.5,1 L4.5,4 L7.5,7 Z" fill="#d0d0d0"/></svg>
<svg class="a" style="left:1352px;top:66px;" width="8" height="8" viewBox="0 0 8 8"><path d="M1,1 L4,4 L1,7 Z M4.5,1 L7.5,4 L4.5,7 Z" fill="#d0d0d0"/></svg>
<div class="a" style="left:1084px;top:80px;width:20px;height:4px;background:repeating-linear-gradient(90deg,#3a3a3a 0 1px,transparent 1px 3px);"></div>
<svg class="a" style="left:1084px;top:92px;" width="20" height="15" viewBox="0 0 20 15"><path d="M10,1 Q19,1 19.5,7 Q20,12 14,12.5 Q11,12.5 11,14 Q6,15 2,12 Q-1,8 2,4 Q5,1 10,1 Z" fill="#cccccc"/><circle cx="5" cy="9" r="1.6" fill="#535353"/><circle cx="9" cy="11.5" r="1.6" fill="#535353"/><circle cx="14" cy="9.5" r="1.6" fill="#535353"/><circle cx="16" cy="5.5" r="1.4" fill="#535353"/><circle cx="6" cy="5" r="1.4" fill="#535353"/></svg>
<svg class="a" style="left:1086px;top:120px;" width="17" height="17" viewBox="0 0 17 17"><defs><linearGradient id="qg" x1="0" y1="0" x2="1" y2="1"><stop offset="0" stop-color="#111"/><stop offset="1" stop-color="#eee"/></linearGradient></defs><path d="M1,1 Q15,2 16,16 L1,16 Z" fill="url(#qg)" stroke="#d0d0d0" stroke-width="1"/></svg>
<div class="a" style="left:1075px;top:144px;width:37px;height:2px;background:#444444;"></div>
<div class="a" style="left:1084px;top:150px;width:20px;height:4px;background:repeating-linear-gradient(90deg,#3a3a3a 0 1px,transparent 1px 3px);"></div>
<svg class="a" style="left:1085px;top:163px;" width="19" height="13" viewBox="0 0 19 13"><rect x="0.5" y="0.5" width="18" height="12" fill="none" stroke="#cccccc" stroke-width="1.2"/><rect x="2" y="2" width="4.5" height="4" fill="#cccccc"/><rect x="7.5" y="2" width="4" height="4" fill="#999"/><rect x="12.5" y="2" width="4.5" height="4" fill="#cccccc"/><rect x="2" y="7" width="4.5" height="4" fill="#cccccc"/><rect x="7.5" y="7" width="4" height="4" fill="#cccccc"/><rect x="12.5" y="7" width="4.5" height="4" fill="#999"/></svg>
<svg class="a" style="left:1086px;top:189px;" width="18" height="19" viewBox="0 0 18 19"><rect x="4" y="10" width="10" height="8" fill="#cccccc"/><path d="M6,10 L4,3 M9,10 L9,1 M12,10 L15,4" stroke="#cccccc" stroke-width="1.6"/><circle cx="4" cy="3" r="2" fill="#cccccc"/><circle cx="15" cy="4" r="2.2" fill="#cccccc"/><circle cx="9.5" cy="2" r="1.5" fill="#cccccc"/></svg>
<svg class="a" style="left:1085px;top:216px;" width="19" height="18" viewBox="0 0 19 18"><circle cx="9.5" cy="4.5" r="4" fill="#cccccc"/><circle cx="5" cy="10" r="4" fill="#cccccc"/><circle cx="14" cy="10" r="4" fill="#cccccc"/><path d="M9.5,9 V16 M6,17 H13" stroke="#cccccc" stroke-width="1.5"/></svg>
<div class="a" style="left:1075px;top:242px;width:37px;height:2px;background:#444444;"></div>
<div class="a" style="left:1084px;top:247px;width:20px;height:4px;background:repeating-linear-gradient(90deg,#3a3a3a 0 1px,transparent 1px 3px);"></div>
<svg class="a" style="left:1085px;top:260px;" width="19" height="13" viewBox="0 0 19 13"><rect x="0" y="0" width="19" height="1.5" fill="#cccccc"/><rect x="0" y="4.5" width="19" height="2.5" fill="#cccccc"/><rect x="0" y="9.5" width="19" height="3.5" fill="#cccccc"/></svg>
<svg class="a" style="left:1084px;top:285px;" width="20" height="20" viewBox="0 0 20 20"><circle cx="8" cy="8" r="7" fill="#bdbdbd"/><circle cx="12" cy="12" r="7" fill="#9a9a9a" stroke="#cfcfcf" stroke-width="1"/></svg>
<div class="a" style="left:1075px;top:311px;width:37px;height:2px;background:#444444;"></div>
<div class="a" style="left:1084px;top:317px;width:20px;height:4px;background:repeating-linear-gradient(90deg,#3a3a3a 0 1px,transparent 1px 3px);"></div>
<svg class="a" style="left:1085px;top:326px;" width="19" height="19" viewBox="0 0 19 19"><circle cx="9.5" cy="9.5" r="8.5" fill="none" stroke="#cfcfcf" stroke-width="1.3" stroke-dasharray="2 1.5"/><circle cx="9.5" cy="9.5" r="6" fill="#bdbdbd"/></svg>
<svg class="a" style="left:1085px;top:355px;" width="19" height="17" viewBox="0 0 19 17"><rect x="6.5" y="0.75" width="12" height="12" fill="none" stroke="#cccccc" stroke-width="1.4"/><rect x="0.75" y="7.75" width="6" height="6" fill="none" stroke="#cccccc" stroke-width="1.4"/><rect x="3.75" y="10.75" width="6" height="6" fill="none" stroke="#cccccc" stroke-width="1.4"/></svg>
<div class="a" style="left:1075px;top:380px;width:37px;height:2px;background:#444444;"></div>
<div class="a" style="left:1084px;top:386px;width:20px;height:4px;background:repeating-linear-gradient(90deg,#3a3a3a 0 1px,transparent 1px 3px);"></div>
<div class="a" style="left:1080px;top:394px;width:27px;height:21px;background:#2e2e2e;border-radius:2px;"></div>
<svg class="a" style="left:1084px;top:397px;" width="19" height="16" viewBox="0 0 19 16"><path d="M9.5,0.5 L18,5 L9.5,9.5 L1,5 Z" fill="#e0e0e0"/><path d="M2.5,8.5 L9.5,12.5 L16.5,8.5 L18,9.5 L9.5,14.5 L1,9.5 Z" fill="#e0e0e0"/></svg>
<svg class="a" style="left:1085px;top:423px;" width="19" height="19" viewBox="0 0 19 19"><path d="M8,2 H1.5 V17.5 H17 V11" fill="none" stroke="#cccccc" stroke-width="1.8"/><path d="M8,11 L17,2 M11,1.5 H17.5 V8" fill="none" stroke="#cccccc" stroke-width="1.8"/></svg>
<svg class="a" style="left:1084px;top:450px;" width="19" height="19" viewBox="0 0 19 19"><rect x="0.75" y="0.75" width="11" height="11" fill="none" stroke="#cccccc" stroke-width="1.4"/><rect x="6.75" y="7.75" width="11" height="10" fill="#535353" stroke="#cccccc" stroke-width="1.4"/></svg>
<div class="a" style="left:1075px;top:477px;width:37px;height:2px;background:#444444;"></div>
<div class="a" style="left:1084px;top:483px;width:20px;height:4px;background:repeating-linear-gradient(90deg,#3a3a3a 0 1px,transparent 1px 3px);"></div>
<svg class="a" style="left:1085px;top:493px;" width="19" height="17" viewBox="0 0 19 17"><path d="M1,0.5 H18 V11.5 H8 L4,16 L4,11.5 H1 Z" fill="#cccccc"/></svg>
<div class="a" style="left:1075px;top:517px;width:37px;height:2px;background:#444444;"></div>
<div class="t" style="left:1124px;top:115.45px;font-size:10px;line-height:11.17px;color:#d6d6d6;font-weight:normal;"></div>
<div class="t" style="left:1124px;top:84.59px;font-size:10.4px;line-height:11.62px;color:#f4f4f4;font-weight:normal;-webkit-text-stroke:0.45px #f4f4f4;">Properties</div>
<div class="t" style="left:1190px;top:84.68px;font-size:10.3px;line-height:11.51px;color:#b0b0b0;font-weight:normal;">Libraries</div>
<div class="t" style="left:1124.6px;top:115.68px;font-size:10.3px;line-height:11.51px;color:#cfcfcf;font-weight:normal;">Anchor Point</div>
<div class="a" style="left:1118px;top:136px;width:235px;height:2px;background:#4a4a4a;"></div>
<div class="a" style="left:1118px;top:261px;width:235px;height:2px;background:#4a4a4a;"></div>
<div class="a" style="left:1118px;top:432px;width:235px;height:2px;background:#4a4a4a;"></div>
<div class="a" style="left:1118px;top:474px;width:235px;height:2px;background:#4a4a4a;"></div>
<div class="a" style="left:1118px;top:509px;width:235px;height:2px;background:#4a4a4a;"></div>
<div class="a" style="left:1118px;top:543px;width:235px;height:2px;background:#4a4a4a;"></div>
<div class="a" style="left:1118px;top:627px;width:235px;height:2px;background:#4a4a4a;"></div>
<div class="t" style="left:1125px;top:150.18px;font-size:10.3px;line-height:11.51px;color:#cfcfcf;font-weight:normal;">Transform</div>
<svg class="a" style="left:1125px;top:182px;" width="20" height="19" viewBox="0 0 20 19"><g fill="none" stroke="#d8d8d8" stroke-width="1"><rect x="0.5" y="0.5" width="4" height="4"/><rect x="7.5" y="0.5" width="4" height="4"/><rect x="14.5" y="0.5" width="4" height="4"/><rect x="0.5" y="7.5" width="4" height="4"/><rect x="14.5" y="7.5" width="4" height="4"/><rect x="0.5" y="14.5" width="4" height="4"/><rect x="7.5" y="14.5" width="4" height="4"/><rect x="14.5" y="14.5" width="4" height="4"/><path d="M4.5,2.5 H7.5 M11.5,2.5 H14.5 M4.5,16.5 H7.5 M11.5,16.5 H14.5 M2.5,4.5 V7.5 M2.5,11.5 V14.5 M16.5,4.5 V7.5 M16.5,11.5 V14.5"/></g><rect x="7" y="7" width="5" height="5" fill="#f0f0f0"/></svg>
<div class="t" style="left:1155px;top:174.95px;font-size:10px;line-height:11.17px;color:#bdbdbd;font-weight:normal;">X:</div>
<div class="t" style="left:1155px;top:199.95px;font-size:10px;line-height:11.17px;color:#bdbdbd;font-weight:normal;">Y:</div>
<div class="t" style="left:1240px;top:174.95px;font-size:10px;line-height:11.17px;color:#bdbdbd;font-weight:normal;">W:</div>
<div class="t" style="left:1240px;top:199.95px;font-size:10px;line-height:11.17px;color:#bdbdbd;font-weight:normal;">H:</div>
<div class="a" style="left:1170px;top:169px;width:55px;height:19px;background:#464646;border-radius:2px;box-shadow:0 0 0 1px #4c4c4c;"></div>
<div class="t" style="left:1174px;top:173.81px;font-size:9.6px;line-height:10.72px;color:#ececec;font-weight:normal;">406.3042 p</div>
<div class="a" style="left:1170px;top:195px;width:55px;height:19px;background:#464646;border-radius:2px;box-shadow:0 0 0 1px #4c4c4c;"></div>
<div class="t" style="left:1174px;top:199.81px;font-size:9.6px;line-height:10.72px;color:#ececec;font-weight:normal;">300.2558 p</div>
<div class="a" style="left:1259px;top:169px;width:55px;height:19px;background:#464646;border-radius:2px;box-shadow:0 0 0 1px #4c4c4c;"></div>
<div class="t" style="left:1263px;top:173.81px;font-size:9.6px;line-height:10.72px;color:#ececec;font-weight:normal;">351.8909 p</div>
<div class="a" style="left:1259px;top:195px;width:55px;height:19px;background:#464646;border-radius:2px;box-shadow:0 0 0 1px #4c4c4c;"></div>
<div class="t" style="left:1263px;top:199.81px;font-size:9.6px;line-height:10.72px;color:#ececec;font-weight:normal;">370 pt</div>
<svg class="a" style="left:1328px;top:185px;" width="16" height="16" viewBox="0 0 16 16"><path d="M5,5 Q2,8 5,11 L7,13 Q10,15 12,12 M11,11 Q14,8 11,5 L9,3 Q6,1 4,4" fill="none" stroke="#cfcfcf" stroke-width="1.4"/><path d="M1,1 L15,15" stroke="#cfcfcf" stroke-width="1.4"/></svg>
<svg class="a" style="left:1150px;top:224px;" width="13" height="10" viewBox="0 0 13 10"><path d="M0.5,9.5 H12 L7,1 Z" fill="none" stroke="#cfcfcf" stroke-width="1.1"/><path d="M4,9.5 Q5,6 7,7" fill="none" stroke="#cfcfcf" stroke-width="1"/></svg>
<div class="a" style="left:1168px;top:222px;width:36px;height:18px;background:#464646;"></div>
<div class="t" style="left:1171px;top:226.45px;font-size:10px;line-height:11.17px;color:#ececec;font-weight:normal;">0°</div>
<div class="a" style="left:1206px;top:222px;width:17px;height:18px;background:#4a4a4a;"></div>
<svg class="a" style="left:1210px;top:228px;" width="9" height="6" viewBox="0 0 9 6"><path d="M1,1 L4.5,4.5 L8,1" fill="none" stroke="#e0e0e0" stroke-width="1.5"/></svg>
<svg class="a" style="left:1265px;top:225px;" width="15" height="13" viewBox="0 0 15 13"><path d="M0.5,1 L5.5,6.5 L0.5,12 Z" fill="none" stroke="#cfcfcf" stroke-width="1"/><path d="M14.5,1 L9.5,6.5 L14.5,12 Z" fill="#cfcfcf"/><path d="M7.5,0 V13" stroke="#cfcfcf" stroke-width="1" stroke-dasharray="1.5 1"/></svg>
<svg class="a" style="left:1290px;top:224px;" width="13" height="14" viewBox="0 0 13 14"><path d="M1,0.5 L12,0.5 L6.5,5.5 Z" fill="#cfcfcf"/><path d="M1,13.5 L12,13.5 L6.5,8.5 Z" fill="none" stroke="#cfcfcf" stroke-width="1"/><path d="M0,7 H13" stroke="#cfcfcf" stroke-width="1" stroke-dasharray="1.5 1"/></svg>
<div class="a" style="left:1333px;top:251px;width:3px;height:3px;border-radius:50%;background:#d0d0d0;"></div>
<div class="a" style="left:1338px;top:251px;width:3px;height:3px;border-radius:50%;background:#d0d0d0;"></div>
<div class="a" style="left:1343px;top:251px;width:3px;height:3px;border-radius:50%;background:#d0d0d0;"></div>
<div class="t" style="left:1125px;top:275.68px;font-size:10.3px;line-height:11.51px;color:#cfcfcf;font-weight:normal;">Appearance</div>
<div class="a" style="left:1125px;top:299px;width:18px;height:18px;background:#fff;border:1px solid #2a2a2a;box-sizing:border-box;"></div>
<svg class="a" style="left:1125px;top:299px;" width="18" height="18" viewBox="0 0 18 18"><line x1="1" y1="17" x2="17" y2="1" stroke="#d01c24" stroke-width="2"/></svg>
<div class="t" style="left:1155px;top:303.68px;font-size:10.3px;line-height:11.51px;color:#d8d8d8;font-weight:normal;">Fill</div>
<div class="a" style="left:1125px;top:328px;width:18px;height:18px;background:#3e3e3e;border:1px solid #2a2a2a;box-sizing:border-box;"></div>
<div class="a" style="left:1130px;top:333px;width:8px;height:8px;background:#535353;border:1px solid #222;"></div>
<div class="t" style="left:1126px;top:329.12px;font-size:6.5px;line-height:7.26px;color:#cfcfcf;font-weight:bold;">?</div>
<div class="t" style="left:1138px;top:329.12px;font-size:6.5px;line-height:7.26px;color:#cfcfcf;font-weight:bold;">?</div>
<div class="t" style="left:1126px;top:341.12px;font-size:6.5px;line-height:7.26px;color:#cfcfcf;font-weight:bold;">?</div>
<div class="t" style="left:1138px;top:341.12px;font-size:6.5px;line-height:7.26px;color:#cfcfcf;font-weight:bold;">?</div>
<div class="t" style="left:1155px;top:333.18px;font-size:10.3px;line-height:11.51px;color:#f2f2f2;font-weight:normal;-webkit-text-stroke:0.4px #f2f2f2;">Stroke</div>
<div class="a" style="left:1155px;top:345px;width:28px;height:1px;background:repeating-linear-gradient(90deg,#cfcfcf 0 1px,transparent 1px 2px);"></div>
<div class="a" style="left:1206px;top:327px;width:16px;height:18px;background:#474747;"></div>
<svg class="a" style="left:1209px;top:329px;" width="10" height="14" viewBox="0 0 10 14"><path d="M1,4.5 L5,1 L9,4.5 M1,9.5 L5,13 L9,9.5" fill="none" stroke="#cfcfcf" stroke-width="1.2"/></svg>
<div class="a" style="left:1222px;top:327px;width:32px;height:18px;background:#464646;"></div>
<div class="t" style="left:1226px;top:331.45px;font-size:10px;line-height:11.17px;color:#ececec;font-weight:normal;width:27px;overflow:hidden;">0.0353</div>
<div class="a" style="left:1254px;top:327px;width:18px;height:18px;background:#4a4a4a;"></div>
<svg class="a" style="left:1258px;top:333px;" width="10" height="6" viewBox="0 0 10 6"><path d="M1,1 L5,5 L9,1" fill="none" stroke="#e0e0e0" stroke-width="1.5"/></svg>
<div class="a" style="left:1126px;top:358px;width:16px;height:16px;border:1px solid #8a8a8a;box-sizing:border-box;background-color:#5a5a5a;background-image:linear-gradient(45deg,#6a6a6a 25%,transparent 25%,transparent 75%,#6a6a6a 75%),linear-gradient(45deg,#6a6a6a 25%,transparent 25%,transparent 75%,#6a6a6a 75%);background-size:6px 6px;background-position:0 0,3px 3px;"></div>
<div class="t" style="left:1155px;top:362.18px;font-size:10.3px;line-height:11.51px;color:#f2f2f2;font-weight:normal;-webkit-text-stroke:0.4px #f2f2f2;">Opacity</div>
<div class="a" style="left:1155px;top:374px;width:34px;height:1px;background:repeating-linear-gradient(90deg,#cfcfcf 0 1px,transparent 1px 2px);"></div>
<div class="a" style="left:1205px;top:357px;width:49px;height:18px;background:#464646;"></div>
<div class="t" style="left:1208px;top:361.45px;font-size:10px;line-height:11.17px;color:#ececec;font-weight:normal;">100%</div>
<div class="a" style="left:1254px;top:357px;width:19px;height:18px;background:#4a4a4a;"></div>
<svg class="a" style="left:1260px;top:362px;" width="6" height="10" viewBox="0 0 6 10"><path d="M1,1 L5,5 L1,9" fill="none" stroke="#e0e0e0" stroke-width="1.5"/></svg>
<div class="t" style="left:1131px;top:391.93px;font-size:15px;line-height:16.75px;color:#c4c4c4;font-weight:normal;font-family:Liberation Serif,serif;-webkit-text-stroke:0.2px #c4c4c4;"><i>fx</i></div>
<div class="a" style="left:1144px;top:404px;width:1.5px;height:1.5px;background:#a8a8a8;"></div>
<div class="a" style="left:1333px;top:423px;width:3px;height:3px;border-radius:50%;background:#d0d0d0;"></div>
<div class="a" style="left:1338px;top:423px;width:3px;height:3px;border-radius:50%;background:#d0d0d0;"></div>
<div class="a" style="left:1343px;top:423px;width:3px;height:3px;border-radius:50%;background:#d0d0d0;"></div>
<div class="t" style="left:1125px;top:452.68px;font-size:10.3px;line-height:11.51px;color:#cfcfcf;font-weight:normal;">Convert:</div>
<svg class="a" style="left:1187px;top:449px;" width="13" height="15" viewBox="0 0 13 15"><rect x="0" y="0" width="5" height="5" fill="#cfcfcf"/><path d="M2.5,4 V15 M3.5,3 L12,12" stroke="#cfcfcf" stroke-width="1.3"/></svg>
<svg class="a" style="left:1214px;top:449px;" width="16" height="15" viewBox="0 0 16 15"><path d="M1,15 Q3,6 8,4 Q11,2 15,1" fill="none" stroke="#cfcfcf" stroke-width="1.3"/><rect x="4" y="3" width="5" height="5" fill="#cfcfcf"/></svg>
<div class="t" style="left:1125px;top:488.18px;font-size:10.3px;line-height:11.51px;color:#cfcfcf;font-weight:normal;">Anchors:</div>
<svg class="a" style="left:1185px;top:484px;" width="18" height="19" viewBox="0 0 18 19"><rect x="1" y="1" width="6" height="1.8" fill="#cfcfcf"/><path d="M1.5,17.5 L3,10.5 L8.5,5 L13,9.5 L7.5,15 Z" fill="#cfcfcf"/><path d="M9.5,4 L12,1.5 L16.5,6 L14,8.5 Z" fill="#cfcfcf"/><path d="M1.8,17.2 L6.5,12.5" stroke="#545454" stroke-width="0.9"/><circle cx="7" cy="12" r="1" fill="#545454"/></svg>
<svg class="a" style="left:1214px;top:485px;" width="17" height="17" viewBox="0 0 17 17"><path d="M3,13 Q4,6 12,3" fill="none" stroke="#6a6a6a" stroke-width="1.6" stroke-dasharray="1.6 2"/><rect x="0.5" y="12" width="4" height="4" fill="#6a6a6a"/><rect x="12" y="0.5" width="4" height="4" fill="#6a6a6a"/></svg>
<svg class="a" style="left:1242px;top:485px;" width="18" height="18" viewBox="0 0 18 18"><path d="M3,12 Q4,4 12,2.5" fill="none" stroke="#cfcfcf" stroke-width="1.3"/><rect x="0.5" y="11.5" width="4.5" height="4.5" fill="#cfcfcf"/><rect x="11" y="0.5" width="4.5" height="4.5" fill="#cfcfcf"/><circle cx="14.5" cy="9" r="1.7" fill="none" stroke="#cfcfcf" stroke-width="1.2"/><circle cx="14.5" cy="15.5" r="1.7" fill="none" stroke="#cfcfcf" stroke-width="1.2"/><path d="M6,10 L13,14.5 M6,14.5 L13,10" stroke="#cfcfcf" stroke-width="1.3"/></svg>
<div class="t" style="left:1127px;top:521.68px;font-size:10.3px;line-height:11.51px;color:#f2f2f2;font-weight:normal;-webkit-text-stroke:0.4px #f2f2f2;">Corners:</div>
<div class="a" style="left:1127px;top:533px;width:37px;height:1px;background:repeating-linear-gradient(90deg,#cfcfcf 0 1px,transparent 1px 2px);"></div>
<div class="a" style="left:1183px;top:518px;width:17px;height:19px;background:#474747;"></div>
<svg class="a" style="left:1186px;top:520px;" width="11" height="15" viewBox="0 0 11 15"><path d="M1,5 L5.5,1 L10,5 M1,10 L5.5,14 L10,10" fill="none" stroke="#cfcfcf" stroke-width="1.2"/></svg>
<div class="a" style="left:1201px;top:518px;width:60px;height:19px;background:#464646;"></div>
<div class="t" style="left:1204px;top:522.45px;font-size:10px;line-height:11.17px;color:#ececec;font-weight:normal;">0 pt</div>
<div class="t" style="left:1125px;top:557.18px;font-size:10.3px;line-height:11.51px;color:#cfcfcf;font-weight:normal;">Align</div>
<svg class="a" style="left:1129px;top:585px;" width="24" height="17" viewBox="0 0 24 17"><rect x="0.5" y="0.5" width="15" height="15" fill="none" stroke="#cfcfcf" stroke-width="1" stroke-dasharray="1.5 1.5"/><path d="M4,3 L9,9" stroke="#cfcfcf" stroke-width="1.4"/><circle cx="8.5" cy="9.5" r="2.5" fill="none" stroke="#cfcfcf" stroke-width="1.2"/><path d="M17,7 L20,10 L23,7" fill="none" stroke="#cfcfcf" stroke-width="1.1"/></svg>
<svg class="a" style="left:1166px;top:585px;" width="18" height="17" viewBox="0 0 18 17"><rect x="0" y="0" width="1.3" height="17" fill="#cccccc"/><rect x="3" y="2" width="8" height="5" fill="#cccccc"/><rect x="3" y="9" width="13" height="5" fill="#cccccc"/></svg>
<svg class="a" style="left:1195px;top:585px;" width="18" height="17" viewBox="0 0 18 17"><rect x="7" y="0" width="1.3" height="17" fill="#cccccc"/><rect x="3.5" y="2" width="8" height="5" fill="#cccccc"/><rect x="1" y="9" width="13" height="5" fill="#cccccc"/></svg>
<svg class="a" style="left:1226px;top:585px;" width="18" height="17" viewBox="0 0 18 17"><rect x="15" y="0" width="1.3" height="17" fill="#cccccc"/><rect x="6" y="2" width="8" height="5" fill="#cccccc"/><rect x="1" y="9" width="13" height="5" fill="#cccccc"/></svg>
<svg class="a" style="left:1255px;top:585px;" width="18" height="17" viewBox="0 0 18 17"><rect x="0" y="0" width="18" height="1.3" fill="#cccccc"/><rect x="2" y="3" width="5" height="13" fill="#cccccc"/><rect x="9" y="3" width="5" height="8" fill="#cccccc"/></svg>
<svg class="a" style="left:1285px;top:585px;" width="18" height="17" viewBox="0 0 18 17"><rect x="0" y="7.5" width="18" height="1.3" fill="#cccccc"/><rect x="2" y="2" width="5" height="13" fill="#cccccc"/><rect x="9" y="4.5" width="5" height="8" fill="#cccccc"/></svg>
<svg class="a" style="left:1315px;top:585px;" width="18" height="17" viewBox="0 0 18 17"><rect x="0" y="15.7" width="18" height="1.3" fill="#cccccc"/><rect x="2" y="1" width="5" height="13" fill="#cccccc"/><rect x="9" y="6" width="5" height="8" fill="#cccccc"/></svg>
<div class="a" style="left:1333px;top:618px;width:3px;height:3px;border-radius:50%;background:#d0d0d0;"></div>
<div class="a" style="left:1338px;top:618px;width:3px;height:3px;border-radius:50%;background:#d0d0d0;"></div>
<div class="a" style="left:1343px;top:618px;width:3px;height:3px;border-radius:50%;background:#d0d0d0;"></div>
<div class="t" style="left:1125px;top:646.18px;font-size:10.3px;line-height:11.51px;color:#cfcfcf;font-weight:normal;">Quick Actions</div>
<div class="a" style="left:178px;top:69px;width:234px;height:18px;background:#ffffff;box-shadow:1px 2px 3px rgba(0,0,0,0.45);"></div>
<div class="t" style="left:184px;top:71.14px;font-size:12px;line-height:13.40px;color:#4a4a4a;font-weight:normal;-webkit-text-stroke:0;">Convert selected anchor points to smooth</div>
<div class="t" style="left:331px;top:198.70px;font-size:14.7px;line-height:16.42px;color:#c8182a;font-weight:bold;text-shadow:0 0 1px #fff,0 0 1px #fff,0 0 2px #fff,1px 2px 2.5px rgba(0,0,0,0.6);">Công cụ tạo bầu cho điểm nhọn</div>
<div class="t" style="left:144px;top:269.70px;font-size:14.7px;line-height:16.42px;color:#c8182a;font-weight:bold;text-shadow:0 0 1px #fff,0 0 1px #fff,0 0 2px #fff,1px 2px 2.5px rgba(0,0,0,0.6);">Công cụ để chọn các điểm nhọn</div>
<div class="t" style="left:35px;top:663.70px;font-size:14.7px;line-height:16.42px;color:#c8182a;font-weight:bold;text-shadow:0 0 1px #fff,0 0 1px #fff,0 0 2px #fff,1px 2px 2.5px rgba(0,0,0,0.6);">Những điểm được chọn</div>
<svg class="a" style="left:0;top:0;filter:drop-shadow(1px 2px 1.5px rgba(0,0,0,0.45))" width="1366" height="724" viewBox="0 0 1366 724"><line x1="396" y1="191" x2="198.19" y2="61.04" stroke="#cc2a30" stroke-width="1.35"/><polygon points="189,55 202.39,58.29 197.34,65.98" fill="#e01820"/><line x1="199" y1="266" x2="68.37" y2="121.17" stroke="#cc2a30" stroke-width="1.35"/><polygon points="61,113 73.12,119.57 66.29,125.73" fill="#e01820"/><line x1="129" y1="634" x2="334.96" y2="491.27" stroke="#cc2a30" stroke-width="1.35"/><polygon points="344,485 335.94,496.19 330.69,488.62" fill="#e01820"/><line x1="123" y1="652" x2="351.44" y2="585.09" stroke="#cc2a30" stroke-width="1.35"/><polygon points="362,582 350.82,590.07 348.23,581.24" fill="#e01820"/></svg>
<svg class="a" style="left:176px;top:48px;" width="15" height="21" viewBox="0 0 15 21"><path d="M1,1 L1,17 L5,13.3 L8,20 L10.8,18.8 L7.8,12.3 L13,12.3 Z" fill="#fff" stroke="#000" stroke-width="1"/></svg>
</body></html>
